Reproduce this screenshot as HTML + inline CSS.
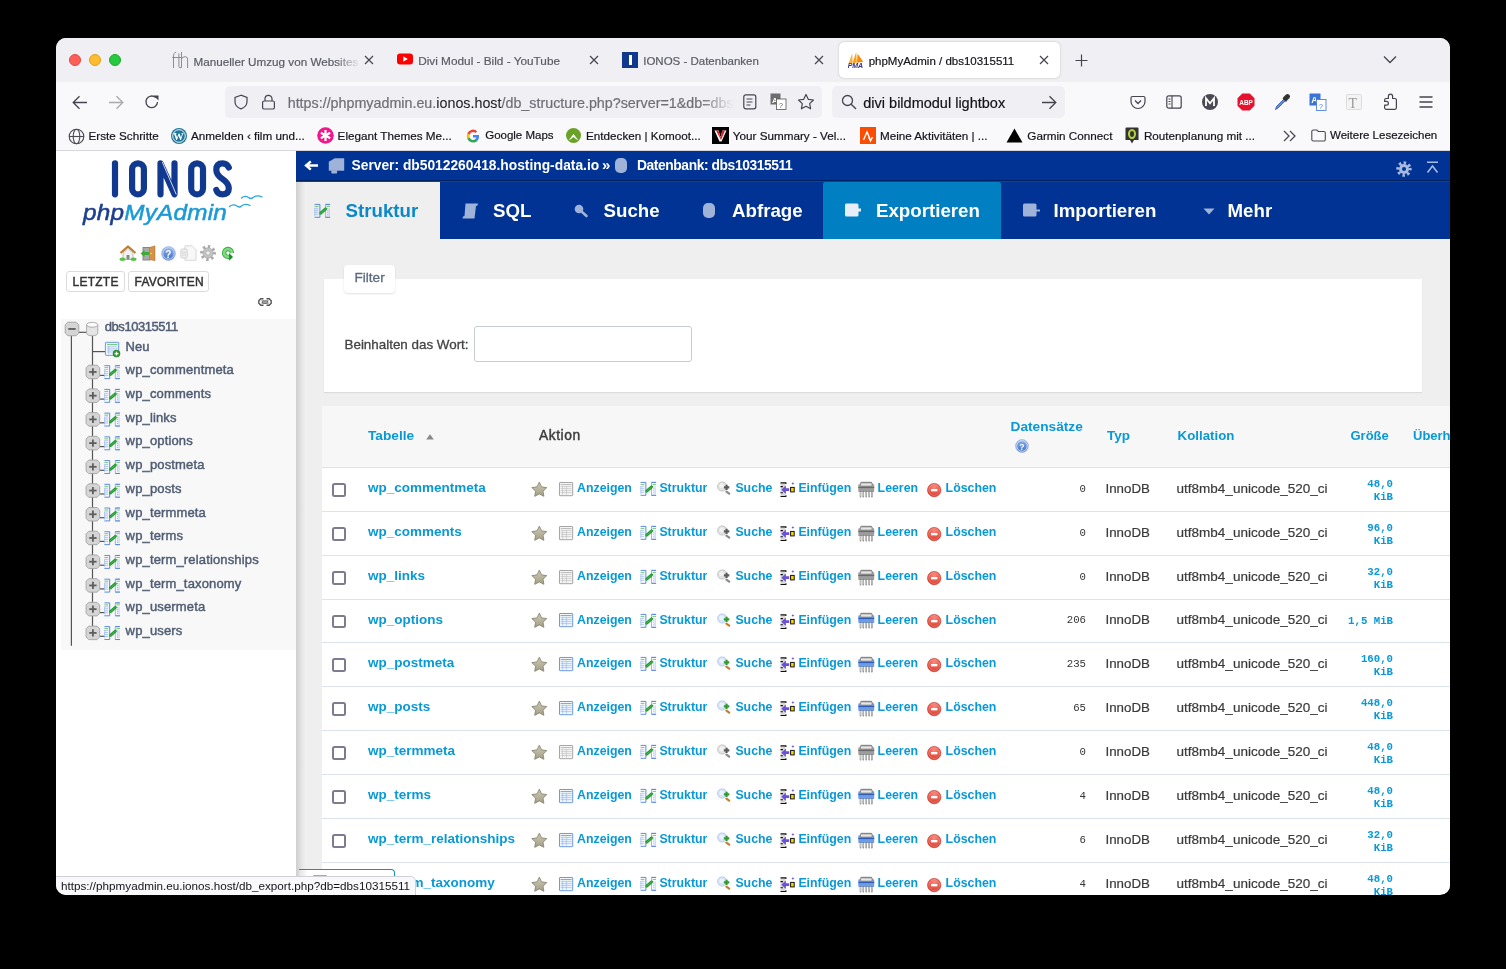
<!DOCTYPE html>
<html><head><meta charset="utf-8">
<style>
*{box-sizing:border-box}
html,body{margin:0;padding:0}
body{background:#000;width:1506px;height:969px;overflow:hidden;position:relative;font-family:"Liberation Sans",sans-serif}
#win{position:absolute;left:56px;top:38px;width:1394px;height:857px;border-radius:10px;overflow:hidden;background:#fff}
#pg{position:absolute;left:-56px;top:-38px;width:1506px;height:969px;-webkit-font-smoothing:antialiased;will-change:transform}
.a{position:absolute}
.t{position:absolute;white-space:nowrap;line-height:1}
svg{position:absolute;overflow:visible}
</style></head>
<body>
<div id="win"><div id="pg">

<!-- ============ TAB STRIP ============ -->
<div class="a" style="left:0;top:38px;width:1506px;height:44px;background:#f0f0f4"></div>
<div class="a" style="left:69px;top:54px;width:12px;height:12px;border-radius:50%;background:#fe5f57;border:0.5px solid #e2463f"></div>
<div class="a" style="left:89px;top:54px;width:12px;height:12px;border-radius:50%;background:#febc2e;border:0.5px solid #e1a116"></div>
<div class="a" style="left:109px;top:54px;width:12px;height:12px;border-radius:50%;background:#28c840;border:0.5px solid #1aab29"></div>

<!-- tab1 -->
<svg style="left:168px;top:48px" width="24" height="24" viewBox="0 0 24 24"><g fill="none" stroke="#8d8d8d" stroke-width="1"><path d="M5.5 20V9Q5.5 4.2 8.2 4.2"/><path d="M4.2 9.5H14.4"/><path d="M10.9 5.4V18.5Q10.9 19.6 12 19.6H13.5"/><path d="M13.5 4V19.6"/><path d="M13.5 11Q14.5 8.7 17 8.7Q19.6 8.7 19.6 11V20"/></g></svg>
<div class="t" style="left:193.5px;top:55.5px;font-size:11.7px;color:#5b5b66;-webkit-text-stroke:0.2px #5b5b66">Manueller Umzug von Websites</div>
<div class="a" style="left:335px;top:48px;width:26px;height:24px;background:linear-gradient(90deg,rgba(240,240,244,0),#f0f0f4)"></div>
<svg style="left:364px;top:55px" width="10" height="10" viewBox="0 0 10 10"><path d="M1 1L9 9M9 1L1 9" stroke="#45444f" stroke-width="1.2"/></svg>

<!-- tab2 -->
<svg style="left:397px;top:53px" width="16" height="12" viewBox="0 0 16 12"><rect x="0" y="0.5" width="16" height="11" rx="3" fill="#f00"/><path d="M6.3 3.3v5.4L10.8 6z" fill="#fff"/></svg>
<div class="t" style="left:418.2px;top:55.5px;font-size:11.8px;color:#5b5b66;-webkit-text-stroke:0.2px #5b5b66">Divi Modul - Bild - YouTube</div>
<svg style="left:589px;top:55px" width="10" height="10" viewBox="0 0 10 10"><path d="M1 1L9 9M9 1L1 9" stroke="#45444f" stroke-width="1.2"/></svg>

<!-- tab3 -->
<div class="a" style="left:622px;top:52px;width:16px;height:16px;background:#11388f"></div>
<div class="a" style="left:628.5px;top:55px;width:3px;height:10px;background:#fff"></div>
<div class="t" style="left:643.2px;top:55.5px;font-size:11.5px;color:#5b5b66;-webkit-text-stroke:0.2px #5b5b66">IONOS - Datenbanken</div>
<svg style="left:814px;top:55px" width="10" height="10" viewBox="0 0 10 10"><path d="M1 1L9 9M9 1L1 9" stroke="#45444f" stroke-width="1.2"/></svg>

<!-- active tab -->
<div class="a" style="left:839px;top:42px;width:221px;height:36px;background:#fff;border-radius:5px;box-shadow:0 0 2px rgba(0,0,0,.25)"></div>
<svg style="left:845.5px;top:51px" width="20" height="18" viewBox="0 0 20 18"><path d="M2.6 12.2L6.2 2.4 6.6 12z" fill="#fbb03b"/><path d="M6.6 12L10.2 1 10.8 11.8z" fill="#f7a21b"/><path d="M11 11.8L11.6 2.8Q14 6 17.2 10.8z" fill="#f38a0c"/><text x="1.8" y="16.6" font-size="7" font-weight="bold" font-style="italic" fill="#34347a" font-family="Liberation Sans" letter-spacing="-0.2">PMA</text></svg>
<div class="t" style="left:868.7px;top:55.5px;font-size:11.5px;color:#15141a;-webkit-text-stroke:0.2px #15141a">phpMyAdmin / dbs10315511</div>
<svg style="left:1039px;top:55px" width="10" height="10" viewBox="0 0 10 10"><path d="M1 1L9 9M9 1L1 9" stroke="#45444f" stroke-width="1.2"/></svg>
<svg style="left:1075px;top:54px" width="13" height="13" viewBox="0 0 13 13"><path d="M6.5 0.5v12M0.5 6.5h12" stroke="#45444f" stroke-width="1.2"/></svg>
<svg style="left:1383px;top:55px" width="14" height="9" viewBox="0 0 14 9"><path d="M1 1.5L7 7.5 13 1.5" fill="none" stroke="#45444f" stroke-width="1.3"/></svg>

<!-- ============ NAV TOOLBAR ============ -->
<div class="a" style="left:0;top:82px;width:1506px;height:68px;background:#f9f9fb"></div>
<div class="a" style="left:0;top:150px;width:1506px;height:1px;background:#d8d8dc"></div>

<svg style="left:72px;top:95px" width="16" height="15" viewBox="0 0 16 15"><path d="M15 7.5H1.5M7.5 1.2L1.2 7.5 7.5 13.8" fill="none" stroke="#45444f" stroke-width="1.3"/></svg>
<svg style="left:108px;top:95px" width="16" height="15" viewBox="0 0 16 15"><path d="M1 7.5h13.5M8.5 1.2l6.3 6.3-6.3 6.3" fill="none" stroke="#a9a9ae" stroke-width="1.3"/></svg>
<svg style="left:144px;top:94px" width="16" height="16" viewBox="0 0 16 16"><path d="M13.5 8A5.8 5.8 0 1 1 11.7 3.6" fill="none" stroke="#45444f" stroke-width="1.3"/><path d="M9.5 1.5h5v5z" fill="#45444f"/></svg>

<div class="a" style="left:225px;top:86px;width:597px;height:32px;background:#f0f0f4;border-radius:5px"></div>
<svg style="left:233px;top:94px" width="16" height="16" viewBox="0 0 16 16"><path d="M8 1.2L2 3.4v4.2c0 3.5 2.6 6.2 6 7.3 3.4-1.1 6-3.8 6-7.3V3.4z" fill="none" stroke="#45444f" stroke-width="1.2"/></svg>
<svg style="left:261px;top:94px" width="15" height="16" viewBox="0 0 15 16"><rect x="1.6" y="7" width="11.8" height="8" rx="1.6" fill="none" stroke="#45444f" stroke-width="1.2"/><path d="M4 7V4.8a3.5 3.5 0 0 1 7 0V7" fill="none" stroke="#45444f" stroke-width="1.2"/></svg>
<div class="t" style="left:287.7px;top:94px;font-size:14.3px;line-height:18px;color:#6f6f76;width:447px;overflow:hidden;-webkit-text-stroke:0.2px #6f6f76">https://phpmyadmin.eu.<span style="color:#15141a">ionos.host</span>/db_structure.php?server=1&amp;db=dbs10315511</div>
<div class="a" style="left:700px;top:90px;width:40px;height:24px;background:linear-gradient(90deg,rgba(240,240,244,0),#f0f0f4 85%)"></div>
<svg style="left:743px;top:94px" width="14" height="16" viewBox="0 0 14 16"><rect x="0.8" y="0.8" width="12" height="14" rx="2" fill="none" stroke="#45444f" stroke-width="1.2"/><path d="M3.5 5h6M3.5 8h6M3.5 11h4" stroke="#45444f" stroke-width="1.2"/></svg>
<svg style="left:770px;top:93px" width="17" height="17" viewBox="0 0 17 17"><rect x="0.5" y="0.5" width="10" height="11" fill="#6d6d6d"/><text x="2" y="9.5" font-size="8" font-weight="bold" fill="#fff" font-family="Liberation Sans">A</text><rect x="6.5" y="6" width="9.5" height="10.5" fill="#fff" stroke="#555" stroke-width="0.8"/><text x="9" y="14.5" font-size="7" fill="#555" font-family="Liberation Sans">?</text></svg>
<svg style="left:797px;top:93px" width="18" height="18" viewBox="0 0 18 18"><path d="M9 1.5l2.3 4.8 5.2.7-3.8 3.6.9 5.2L9 13.3l-4.6 2.5.9-5.2L1.5 7l5.2-.7z" fill="none" stroke="#45444f" stroke-width="1.2" stroke-linejoin="round"/></svg>

<div class="a" style="left:832px;top:86px;width:233px;height:32px;background:#f0f0f4;border-radius:5px"></div>
<svg style="left:841px;top:94px" width="16" height="16" viewBox="0 0 16 16"><circle cx="6.5" cy="6.5" r="5" fill="none" stroke="#45444f" stroke-width="1.3"/><path d="M10.2 10.2L15 15" stroke="#45444f" stroke-width="1.4"/></svg>
<div class="t" style="left:863.3px;top:96px;font-size:14.5px;color:#15141a;-webkit-text-stroke:0.2px #15141a">divi bildmodul lightbox</div>
<svg style="left:1041px;top:95px" width="16" height="15" viewBox="0 0 16 15"><path d="M1 7.5h13.5M8.5 1.2l6.3 6.3-6.3 6.3" fill="none" stroke="#45444f" stroke-width="1.3"/></svg>

<!-- right toolbar icons -->
<svg style="left:1130px;top:94px" width="16" height="16" viewBox="0 0 16 16"><path d="M2.5 2.5h11a1.5 1.5 0 0 1 1.5 1.5v3.5a7 7 0 0 1-14 0V4a1.5 1.5 0 0 1 1.5-1.5z" fill="none" stroke="#45444f" stroke-width="1.2"/><path d="M5 6.5l3 3 3-3" fill="none" stroke="#45444f" stroke-width="1.3"/></svg>
<svg style="left:1166px;top:95px" width="16" height="14" viewBox="0 0 16 14"><rect x="0.8" y="0.8" width="14.4" height="12.4" rx="2" fill="none" stroke="#45444f" stroke-width="1.2"/><path d="M6 1v12M2.5 4h2M2.5 6.5h2M2.5 9h2" stroke="#45444f" stroke-width="1.1"/></svg>
<svg style="left:1202px;top:94px" width="16" height="16" viewBox="0 0 16 16"><circle cx="8" cy="8" r="8" fill="#4a4a55"/><path d="M4 12V4.3l4 5 4-5V12" fill="none" stroke="#fff" stroke-width="1.8"/></svg>
<svg style="left:1237px;top:93px" width="18" height="18" viewBox="0 0 18 18"><path d="M5.3 0.5h7.4l4.8 4.8v7.4l-4.8 4.8H5.3L0.5 12.7V5.3z" fill="#e8112d"/><text x="2.2" y="11.8" font-size="6.5" font-weight="bold" fill="#fff" font-family="Liberation Sans">ABP</text></svg>
<svg style="left:1274px;top:93px" width="17" height="18" viewBox="0 0 17 18"><path d="M1.5 16.5l1-3L10 6l1.5 1.5L4 15z" fill="#5e8ee0" stroke="#2a4d9c" stroke-width="0.8"/><path d="M10 4.5l2.5-2.5a1.8 1.8 0 0 1 2.5 2.5L12.5 7z M9 5l3.5 3.5" fill="#333" stroke="#333" stroke-width="1.4"/></svg>
<svg style="left:1309px;top:93px" width="18" height="18" viewBox="0 0 18 18"><rect x="0.5" y="0.5" width="11" height="12" fill="#3b74d8"/><text x="2.2" y="10" font-size="9" font-weight="bold" fill="#fff" font-family="Liberation Sans">A</text><rect x="7.5" y="6.5" width="9.5" height="11" fill="#fff" stroke="#3b74d8" stroke-width="0.8"/><text x="10" y="15.5" font-size="7" fill="#3b74d8" font-family="Liberation Sans">?</text></svg>
<svg style="left:1346px;top:94px" width="16" height="16" viewBox="0 0 16 16"><rect x="0.5" y="0.5" width="15" height="15" rx="1" fill="#f4f4f4" stroke="#ccc" stroke-width="0.6"/><text x="2.5" y="13.5" font-size="14" font-family="Liberation Serif" fill="#999">T</text></svg>
<svg style="left:1378px;top:90px" width="24" height="24" viewBox="0 0 24 24"><path d="M6.6 10Q6.6 8.5 8.1 8.5H10.4V6.3Q10.4 4.2 12.5 4.2Q14.6 4.2 14.6 6.3V8.5H16.9Q18.4 8.5 18.4 10V17.8Q18.4 19.3 16.9 19.3H8.1Q6.6 19.3 6.6 17.8V15.2H8.5Q10.4 15.2 10.4 13.3Q10.4 11.4 8.5 11.4H6.6Z" fill="none" stroke="#45444f" stroke-width="1.2" stroke-linejoin="round"/></svg>
<svg style="left:1419px;top:96px" width="14" height="12" viewBox="0 0 14 12"><path d="M0.5 1h13M0.5 6h13M0.5 11h13" stroke="#45444f" stroke-width="1.3"/></svg>

<!-- ============ BOOKMARKS ============ -->
<svg style="left:68px;top:128px" width="17" height="17" viewBox="0 0 17 17"><g fill="none" stroke="#4a4a55" stroke-width="1.1"><circle cx="8.5" cy="8.5" r="7.3"/><ellipse cx="8.5" cy="8.5" rx="3.3" ry="7.3"/><path d="M1.2 8.5h14.6"/></g></svg>
<div class="t" style="left:88.5px;top:130px;font-size:11.7px;color:#15141a;-webkit-text-stroke:0.2px #15141a">Erste Schritte</div>
<svg style="left:171px;top:128px" width="16" height="16" viewBox="0 0 16 16"><circle cx="8" cy="8" r="8" fill="#21759b"/><circle cx="8" cy="8" r="6.3" fill="none" stroke="#fff" stroke-width="0.9"/><text x="2.2" y="12.3" font-size="10.5" font-weight="bold" font-family="Liberation Serif" fill="#fff">W</text></svg>
<div class="t" style="left:191px;top:130px;font-size:11.7px;color:#15141a;-webkit-text-stroke:0.2px #15141a">Anmelden ‹ film und...</div>
<svg style="left:317px;top:127px" width="17" height="17" viewBox="0 0 17 17"><circle cx="8.5" cy="8.5" r="8.3" fill="#f0188a"/><path d="M8.5 3v11M3.8 5.8l9.4 5.4M13.2 5.8l-9.4 5.4" stroke="#fff" stroke-width="2.2"/></svg>
<div class="t" style="left:337.6px;top:130px;font-size:11.7px;color:#15141a;-webkit-text-stroke:0.2px #15141a">Elegant Themes Me...</div>
<svg style="left:466px;top:129px" width="14" height="14" viewBox="0 0 14 14"><path d="M13 7.2c0-.5 0-.9-.1-1.3H7v2.5h3.4a3 3 0 0 1-1.3 1.9v1.6h2.1c1.2-1.1 1.8-2.7 1.8-4.7z" fill="#4285f4"/><path d="M7 13.5c1.7 0 3.2-.6 4.2-1.6l-2.1-1.6c-.6.4-1.3.6-2.1.6-1.6 0-3-1.1-3.5-2.6H1.4v1.7A6.4 6.4 0 0 0 7 13.5z" fill="#34a853"/><path d="M3.5 8.3a3.9 3.9 0 0 1 0-2.5V4.1H1.4a6.4 6.4 0 0 0 0 5.9z" fill="#fbbc05"/><path d="M7 3.1c.9 0 1.8.3 2.4.9l1.8-1.8A6.3 6.3 0 0 0 1.4 4.1l2.1 1.7C4 4.3 5.4 3.1 7 3.1z" fill="#ea4335"/></svg>
<div class="t" style="left:485.2px;top:130px;font-size:11.5px;color:#15141a;-webkit-text-stroke:0.2px #15141a">Google Maps</div>
<svg style="left:566px;top:128px" width="15" height="15" viewBox="0 0 15 15"><circle cx="7.5" cy="7.5" r="7.5" fill="#6aa127"/><path d="M2.5 12.5L7.5 6l5 6.5-2.5-1.5-2.5-2-2.5 2z" fill="#fff"/></svg>
<div class="t" style="left:586px;top:130px;font-size:11.7px;color:#15141a;-webkit-text-stroke:0.2px #15141a">Entdecken | Komoot...</div>
<svg style="left:712px;top:127px" width="17" height="17" viewBox="0 0 17 17"><rect width="17" height="17" fill="#000"/><path d="M2.5 3.5h4l2 6.5 2-6.5h4l-5 11h-2z" fill="#fff"/><path d="M4 3.5h2.3l2.2 7 2-7h2.5l-4 9.5z" fill="#e41b23"/></svg>
<div class="t" style="left:732.8px;top:130px;font-size:11.7px;color:#15141a;-webkit-text-stroke:0.2px #15141a">Your Summary - Vel...</div>
<svg style="left:860px;top:127px" width="16" height="17" viewBox="0 0 16 17"><rect width="16" height="17" fill="#fc4c02"/><path d="M3.5 13l3.5-8 3.5 8M8.5 10l2 4 2-4" fill="none" stroke="#fff" stroke-width="1.4"/></svg>
<div class="t" style="left:879.9px;top:130px;font-size:11.7px;color:#15141a;-webkit-text-stroke:0.2px #15141a">Meine Aktivitäten | ...</div>
<svg style="left:1006px;top:128px" width="17" height="15" viewBox="0 0 17 15"><path d="M8.5 0.5L16.5 14.5H0.5z" fill="#000"/></svg>
<div class="t" style="left:1027.3px;top:130px;font-size:11.7px;color:#15141a;-webkit-text-stroke:0.2px #15141a">Garmin Connect</div>
<svg style="left:1125px;top:127px" width="14" height="17" viewBox="0 0 14 17"><path d="M1.5 0.5h11a1 1 0 0 1 1 1v11.5H9l-2 3.5-2-3.5H.5V1.5a1 1 0 0 1 1-1z" fill="#333"/><ellipse cx="7" cy="7" rx="3" ry="4" fill="none" stroke="#b5d53a" stroke-width="2"/></svg>
<div class="t" style="left:1143.9px;top:130px;font-size:11.7px;color:#15141a;-webkit-text-stroke:0.2px #15141a">Routenplanung mit ...</div>
<svg style="left:1283px;top:130px" width="14" height="12" viewBox="0 0 14 12"><path d="M1 1l5 5-5 5M7 1l5 5-5 5" fill="none" stroke="#4a4a55" stroke-width="1.3"/></svg>
<svg style="left:1311px;top:129px" width="15" height="13" viewBox="0 0 15 13"><path d="M0.8 2.5a1.5 1.5 0 0 1 1.5-1.5h3.5l1.5 1.5h5.5a1.5 1.5 0 0 1 1.5 1.5v6.5a1.5 1.5 0 0 1-1.5 1.5H2.3a1.5 1.5 0 0 1-1.5-1.5z" fill="none" stroke="#4a4a55" stroke-width="1.1"/></svg>
<div class="t" style="left:1330px;top:130px;font-size:11.5px;color:#15141a;-webkit-text-stroke:0.2px #15141a">Weitere Lesezeichen</div>

<div class="a" style="left:56px;top:151px;width:240px;height:743px;background:#fff"></div>
<svg style="left:110px;top:158px" width="126" height="40" viewBox="0 0 126 40">
<g fill="none" stroke="#10398f" stroke-width="6.2" stroke-linecap="round">
<path d="M5 5.3v31"/>
<rect x="22.1" y="5.3" width="11.8" height="31" rx="5.9"/>
<path d="M50.5 36.3V5.3L64.5 36.3V5.3" stroke-linejoin="round"/>
<rect x="81.2" y="5.3" width="11.8" height="31" rx="5.9"/>
<path d="M118.8 9.5Q117 5.3 112.5 5.3Q106.3 5.3 106.3 11.8Q106.3 16.8 112.2 20.8Q118.8 25.3 118.8 30.3Q118.8 36.3 112.5 36.3Q107.8 36.3 106.3 32"/>
</g>
<path d="M52.3 4L66.3 36.5" stroke="#fff" stroke-width="0.8"/>
</svg>
<div class="t" style="left:82.5px;top:203px;font-size:21.5px;font-style:italic;font-weight:400;letter-spacing:0.2px;color:#1b3e8f;transform:scaleX(1.13);transform-origin:0 0;-webkit-text-stroke:0.5px currentColor">php<span style="color:#1a9ad6">MyAdmin</span></div>
<svg style="left:228px;top:194px" width="36" height="17" viewBox="0 0 36 17">
<g fill="none" stroke="#2aa5de" stroke-width="1.3" stroke-linecap="round">
<path d="M13.5 4Q17 1 20.5 3.5Q23 5.5 25 3.5Q29 0.5 34 3"/>
<path d="M1.5 12.5Q5 9.5 9 12Q11.5 14 13.5 12Q17 9 22 11.5"/>
</g></svg>
<svg style="left:119px;top:245px" width="18" height="16" viewBox="0 0 18 16">
<path d="M1.5 8L9 1.5 16.5 8" fill="none" stroke="#c17a2e" stroke-width="2.2" stroke-linejoin="round"/>
<path d="M4 8l5-4.5 5 4.5v6.5H4z" fill="#f2f2f2" stroke="#999" stroke-width="0.6"/>
<rect x="7.5" y="10" width="3" height="4.5" fill="#888"/>
<ellipse cx="3.5" cy="14.3" rx="3" ry="1.7" fill="#5cbf4a"/><ellipse cx="14.5" cy="14.3" rx="3" ry="1.7" fill="#5cbf4a"/>
</svg>
<svg style="left:140px;top:245px" width="17" height="16" viewBox="0 0 17 16">
<rect x="2.5" y="2" width="8" height="13.5" fill="#888"/><rect x="3.5" y="3" width="6.5" height="11.5" fill="#aaa"/>
<path d="M0.5 8.5l4-3.5v2h4.5v3H4.5v2z" fill="#3faa3a"/>
<path d="M9.5 2.5L15 0.8v15L9.5 14.5z" fill="#d4914a" stroke="#b06f2a" stroke-width="0.5"/>
<circle cx="11" cy="8.5" r="0.8" fill="#ffdd44"/>
</svg>
<svg style="left:160.5px;top:245.5px" width="15" height="15" viewBox="0 0 15 15"><defs><linearGradient id="hg2" x1="0" y1="0" x2="0" y2="1"><stop offset="0" stop-color="#8fb4ea"/><stop offset="1" stop-color="#3f6fc4"/></linearGradient></defs>
<circle cx="7.5" cy="7.5" r="6.9" fill="url(#hg2)" stroke="#9fb9e0" stroke-width="0.7"/>
<circle cx="7.5" cy="7.5" r="5.7" fill="none" stroke="#e6eefa" stroke-width="0.8"/>
<text x="4.3" y="11.5" font-size="10" font-weight="bold" fill="#fff" font-family="Liberation Sans">?</text>
</svg>
<svg style="left:180px;top:245px" width="17" height="16" viewBox="0 0 17 16">
<path d="M5 0.8h7l4 4v10.5H5z" fill="#f8f8f8" stroke="#cfcfcf" stroke-width="0.8"/>
<rect x="0.8" y="4" width="6.5" height="9" rx="1.5" fill="#f0f0f0" stroke="#c9c9c9" stroke-width="0.8"/>
<path d="M3 6v5M5 6v5" stroke="#ccc" stroke-width="0.7"/>
</svg>
<svg style="left:200px;top:245px" width="16" height="16" viewBox="0 0 16 16">
<circle cx="8" cy="8" r="6.3" fill="none" stroke="#a9a9a9" stroke-width="3.2" stroke-dasharray="2.3,2.65" transform="rotate(-8 8 8)"/>
<circle cx="8" cy="8" r="5.2" fill="#c4c4c4" stroke="#a0a0a0" stroke-width="0.6"/>
<circle cx="8" cy="8" r="2.1" fill="#f4f4f4" stroke="#999" stroke-width="0.5"/>
</svg>
<svg style="left:216px;top:242px" width="24" height="22" viewBox="0 0 24 22">
<path d="M15.9 10.9A3.9 3.9 0 1 0 12 14.8H13.5" fill="none" stroke="#34ad3e" stroke-width="4.3"/>
<path d="M15.9 10.9A3.9 3.9 0 1 0 12 14.8H13.5" fill="none" stroke="#86d688" stroke-width="2.6"/>
<path d="M13 10.9L17 15 13.2 18.8z" fill="#17902a"/>
</svg>
<div class="a" style="left:66px;top:271px;width:59px;height:21px;border:1px solid #dcdcdc;border-radius:3px;background:#fff"></div>
<div class="t" style="left:72.5px;top:276px;font-size:12px;color:#333;letter-spacing:0.25px;-webkit-text-stroke:0.45px #333">LETZTE</div>
<div class="a" style="left:128px;top:271px;width:81px;height:21px;border:1px solid #dcdcdc;border-radius:3px;background:#fff"></div>
<div class="t" style="left:134.5px;top:276px;font-size:12px;color:#333;letter-spacing:0.25px;-webkit-text-stroke:0.45px #333">FAVORITEN</div>
<svg style="left:258px;top:298px" width="14" height="8" viewBox="0 0 14 8">
<path d="M5.5 0.8H2.8L0.8 2.8V5.2L2.8 7.2H5.5M8.5 0.8H11.2L13.2 2.8V5.2L11.2 7.2H8.5" fill="none" stroke="#555" stroke-width="1.4"/>
<path d="M2.8 2.5H5.5M2.8 5.5H5.5M8.5 2.5H11.2M8.5 5.5H11.2" stroke="#bbb" stroke-width="0.7"/>
<rect x="4.2" y="2.9" width="5.6" height="2.4" rx="1" fill="#bbb" stroke="#444" stroke-width="0.9"/>
</svg>
<div class="a" style="left:61px;top:319px;width:235px;height:331px;background:#f8f8f8"></div>
<svg style="left:56px;top:310px" width="240" height="345" viewBox="56 310 240 345"><g fill="none" stroke="#555" stroke-width="1.2"><path d="M71.4 335.8V645.7"/><path d="M92.5 335.8V626.1199999999999"/><path d="M78.8 332.3H86.3"/><path d="M92.5 351.6H105"/><path d="M99.7 375.4H104.5"/><path d="M99.7 399.1H104.5"/><path d="M99.7 422.8H104.5"/><path d="M99.7 446.6H104.5"/><path d="M99.7 470.3H104.5"/><path d="M99.7 494.0H104.5"/><path d="M99.7 517.7H104.5"/><path d="M99.7 541.4H104.5"/><path d="M99.7 565.2H104.5"/><path d="M99.7 588.9H104.5"/><path d="M99.7 612.6H104.5"/><path d="M99.7 636.3H104.5"/></g><path d="M67.8 322.2H76.2L78.8 324.8V333.09999999999997L76.2 335.7H67.8L65.2 333.09999999999997V324.8Z" fill="#d5d5d5" stroke="#a3a3a3" stroke-width="0.9" stroke-linejoin="round"/><path d="M68.3 328.95H75.7" stroke="#5e5e5e" stroke-width="1.8"/><path d="M86.6 324.8v8.4c0 1.5 2.5 2.6 5.6 2.6s5.6-1.1 5.6-2.6v-8.4" fill="#e4e4e4" stroke="#9c9c9c" stroke-width="0.8"/><ellipse cx="92.2" cy="324.8" rx="5.6" ry="2.4" fill="#fbfbfb" stroke="#9c9c9c" stroke-width="0.8"/><rect x="105.4" y="342.3" width="13.3" height="13" rx="0.6" fill="#f4f8fe" stroke="#5b8ee0" stroke-width="0.9"/><path d="M107 344.4h10.4" stroke="#59c057" stroke-width="0.9"/><path d="M107 346.3h10.4M107 348.2h10.4M107 350.1h10.4M107 352h10.4M108.7 346v8" stroke="#9ab8ea" stroke-width="0.7"/><circle cx="116.5" cy="353.6" r="3.5" fill="#2f9a2c" stroke="#1f7a1f" stroke-width="0.6"/><path d="M114.6 353.6h3.8M116.5 351.7v3.8" stroke="#fff" stroke-width="1.3"/><path d="M88.69999999999999 365.2H97.1L99.69999999999999 367.8V376.09999999999997L97.1 378.7H88.69999999999999L86.1 376.09999999999997V367.8Z" fill="#d5d5d5" stroke="#a3a3a3" stroke-width="0.9" stroke-linejoin="round"/><path d="M89.19999999999999 371.95H96.6" stroke="#5e5e5e" stroke-width="1.8"/><path d="M92.89999999999999 368.3V375.59999999999997" stroke="#5e5e5e" stroke-width="1.8"/><g transform="translate(104.1,365.3)"><path d="M0.3 0.4H5.6V13.3H0.3" fill="none" stroke="#4b7fd8" stroke-width="0.9"/><path d="M0.5 4.2V12" stroke="#8cb0ee" stroke-width="0.6"/><path d="M0.3 2.4H4.1" stroke="#63c263" stroke-width="0.9"/><path d="M0.3 4.3H4.1M0.3 6.3H4.1M0.3 8.3H4.1M0.3 10.3H4.1" stroke="#8cb0ee" stroke-width="0.7"/><path d="M15.8 0.4H11.2V13.3H15.8" fill="none" stroke="#8cb0ee" stroke-width="0.9"/><path d="M11.2 0.4H15.8M11.2 13.3H15.8" stroke="#4b7fd8" stroke-width="0.9"/><path d="M12.3 2.4H15.8" stroke="#63c263" stroke-width="0.9"/><path d="M13.4 4.3V12" stroke="#8cb0ee" stroke-width="1" stroke-dasharray="1,1"/><path d="M14.9 4.3V12" stroke="#8cb0ee" stroke-width="0.6"/><path d="M6.4 9.1L11.3 4.9" stroke="#1e9a2e" stroke-width="2.9" stroke-linecap="round"/><path d="M6.4 9.1L11.3 4.9" stroke="#62c462" stroke-width="0.8" stroke-linecap="round" stroke-dasharray="0.9,0.9"/></g><path d="M88.69999999999999 388.92H97.1L99.69999999999999 391.52000000000004V399.82L97.1 402.42H88.69999999999999L86.1 399.82V391.52000000000004Z" fill="#d5d5d5" stroke="#a3a3a3" stroke-width="0.9" stroke-linejoin="round"/><path d="M89.19999999999999 395.67H96.6" stroke="#5e5e5e" stroke-width="1.8"/><path d="M92.89999999999999 392.02000000000004V399.32" stroke="#5e5e5e" stroke-width="1.8"/><g transform="translate(104.1,389.02)"><path d="M0.3 0.4H5.6V13.3H0.3" fill="none" stroke="#4b7fd8" stroke-width="0.9"/><path d="M0.5 4.2V12" stroke="#8cb0ee" stroke-width="0.6"/><path d="M0.3 2.4H4.1" stroke="#63c263" stroke-width="0.9"/><path d="M0.3 4.3H4.1M0.3 6.3H4.1M0.3 8.3H4.1M0.3 10.3H4.1" stroke="#8cb0ee" stroke-width="0.7"/><path d="M15.8 0.4H11.2V13.3H15.8" fill="none" stroke="#8cb0ee" stroke-width="0.9"/><path d="M11.2 0.4H15.8M11.2 13.3H15.8" stroke="#4b7fd8" stroke-width="0.9"/><path d="M12.3 2.4H15.8" stroke="#63c263" stroke-width="0.9"/><path d="M13.4 4.3V12" stroke="#8cb0ee" stroke-width="1" stroke-dasharray="1,1"/><path d="M14.9 4.3V12" stroke="#8cb0ee" stroke-width="0.6"/><path d="M6.4 9.1L11.3 4.9" stroke="#1e9a2e" stroke-width="2.9" stroke-linecap="round"/><path d="M6.4 9.1L11.3 4.9" stroke="#62c462" stroke-width="0.8" stroke-linecap="round" stroke-dasharray="0.9,0.9"/></g><path d="M88.69999999999999 412.64H97.1L99.69999999999999 415.24V423.53999999999996L97.1 426.14H88.69999999999999L86.1 423.53999999999996V415.24Z" fill="#d5d5d5" stroke="#a3a3a3" stroke-width="0.9" stroke-linejoin="round"/><path d="M89.19999999999999 419.39H96.6" stroke="#5e5e5e" stroke-width="1.8"/><path d="M92.89999999999999 415.74V423.03999999999996" stroke="#5e5e5e" stroke-width="1.8"/><g transform="translate(104.1,412.74)"><path d="M0.3 0.4H5.6V13.3H0.3" fill="none" stroke="#4b7fd8" stroke-width="0.9"/><path d="M0.5 4.2V12" stroke="#8cb0ee" stroke-width="0.6"/><path d="M0.3 2.4H4.1" stroke="#63c263" stroke-width="0.9"/><path d="M0.3 4.3H4.1M0.3 6.3H4.1M0.3 8.3H4.1M0.3 10.3H4.1" stroke="#8cb0ee" stroke-width="0.7"/><path d="M15.8 0.4H11.2V13.3H15.8" fill="none" stroke="#8cb0ee" stroke-width="0.9"/><path d="M11.2 0.4H15.8M11.2 13.3H15.8" stroke="#4b7fd8" stroke-width="0.9"/><path d="M12.3 2.4H15.8" stroke="#63c263" stroke-width="0.9"/><path d="M13.4 4.3V12" stroke="#8cb0ee" stroke-width="1" stroke-dasharray="1,1"/><path d="M14.9 4.3V12" stroke="#8cb0ee" stroke-width="0.6"/><path d="M6.4 9.1L11.3 4.9" stroke="#1e9a2e" stroke-width="2.9" stroke-linecap="round"/><path d="M6.4 9.1L11.3 4.9" stroke="#62c462" stroke-width="0.8" stroke-linecap="round" stroke-dasharray="0.9,0.9"/></g><path d="M88.69999999999999 436.36H97.1L99.69999999999999 438.96000000000004V447.26L97.1 449.86H88.69999999999999L86.1 447.26V438.96000000000004Z" fill="#d5d5d5" stroke="#a3a3a3" stroke-width="0.9" stroke-linejoin="round"/><path d="M89.19999999999999 443.11H96.6" stroke="#5e5e5e" stroke-width="1.8"/><path d="M92.89999999999999 439.46000000000004V446.76" stroke="#5e5e5e" stroke-width="1.8"/><g transform="translate(104.1,436.46)"><path d="M0.3 0.4H5.6V13.3H0.3" fill="none" stroke="#4b7fd8" stroke-width="0.9"/><path d="M0.5 4.2V12" stroke="#8cb0ee" stroke-width="0.6"/><path d="M0.3 2.4H4.1" stroke="#63c263" stroke-width="0.9"/><path d="M0.3 4.3H4.1M0.3 6.3H4.1M0.3 8.3H4.1M0.3 10.3H4.1" stroke="#8cb0ee" stroke-width="0.7"/><path d="M15.8 0.4H11.2V13.3H15.8" fill="none" stroke="#8cb0ee" stroke-width="0.9"/><path d="M11.2 0.4H15.8M11.2 13.3H15.8" stroke="#4b7fd8" stroke-width="0.9"/><path d="M12.3 2.4H15.8" stroke="#63c263" stroke-width="0.9"/><path d="M13.4 4.3V12" stroke="#8cb0ee" stroke-width="1" stroke-dasharray="1,1"/><path d="M14.9 4.3V12" stroke="#8cb0ee" stroke-width="0.6"/><path d="M6.4 9.1L11.3 4.9" stroke="#1e9a2e" stroke-width="2.9" stroke-linecap="round"/><path d="M6.4 9.1L11.3 4.9" stroke="#62c462" stroke-width="0.8" stroke-linecap="round" stroke-dasharray="0.9,0.9"/></g><path d="M88.69999999999999 460.08H97.1L99.69999999999999 462.68V470.97999999999996L97.1 473.58H88.69999999999999L86.1 470.97999999999996V462.68Z" fill="#d5d5d5" stroke="#a3a3a3" stroke-width="0.9" stroke-linejoin="round"/><path d="M89.19999999999999 466.83H96.6" stroke="#5e5e5e" stroke-width="1.8"/><path d="M92.89999999999999 463.18V470.47999999999996" stroke="#5e5e5e" stroke-width="1.8"/><g transform="translate(104.1,460.18)"><path d="M0.3 0.4H5.6V13.3H0.3" fill="none" stroke="#4b7fd8" stroke-width="0.9"/><path d="M0.5 4.2V12" stroke="#8cb0ee" stroke-width="0.6"/><path d="M0.3 2.4H4.1" stroke="#63c263" stroke-width="0.9"/><path d="M0.3 4.3H4.1M0.3 6.3H4.1M0.3 8.3H4.1M0.3 10.3H4.1" stroke="#8cb0ee" stroke-width="0.7"/><path d="M15.8 0.4H11.2V13.3H15.8" fill="none" stroke="#8cb0ee" stroke-width="0.9"/><path d="M11.2 0.4H15.8M11.2 13.3H15.8" stroke="#4b7fd8" stroke-width="0.9"/><path d="M12.3 2.4H15.8" stroke="#63c263" stroke-width="0.9"/><path d="M13.4 4.3V12" stroke="#8cb0ee" stroke-width="1" stroke-dasharray="1,1"/><path d="M14.9 4.3V12" stroke="#8cb0ee" stroke-width="0.6"/><path d="M6.4 9.1L11.3 4.9" stroke="#1e9a2e" stroke-width="2.9" stroke-linecap="round"/><path d="M6.4 9.1L11.3 4.9" stroke="#62c462" stroke-width="0.8" stroke-linecap="round" stroke-dasharray="0.9,0.9"/></g><path d="M88.69999999999999 483.8H97.1L99.69999999999999 486.40000000000003V494.7L97.1 497.3H88.69999999999999L86.1 494.7V486.40000000000003Z" fill="#d5d5d5" stroke="#a3a3a3" stroke-width="0.9" stroke-linejoin="round"/><path d="M89.19999999999999 490.55H96.6" stroke="#5e5e5e" stroke-width="1.8"/><path d="M92.89999999999999 486.90000000000003V494.2" stroke="#5e5e5e" stroke-width="1.8"/><g transform="translate(104.1,483.9)"><path d="M0.3 0.4H5.6V13.3H0.3" fill="none" stroke="#4b7fd8" stroke-width="0.9"/><path d="M0.5 4.2V12" stroke="#8cb0ee" stroke-width="0.6"/><path d="M0.3 2.4H4.1" stroke="#63c263" stroke-width="0.9"/><path d="M0.3 4.3H4.1M0.3 6.3H4.1M0.3 8.3H4.1M0.3 10.3H4.1" stroke="#8cb0ee" stroke-width="0.7"/><path d="M15.8 0.4H11.2V13.3H15.8" fill="none" stroke="#8cb0ee" stroke-width="0.9"/><path d="M11.2 0.4H15.8M11.2 13.3H15.8" stroke="#4b7fd8" stroke-width="0.9"/><path d="M12.3 2.4H15.8" stroke="#63c263" stroke-width="0.9"/><path d="M13.4 4.3V12" stroke="#8cb0ee" stroke-width="1" stroke-dasharray="1,1"/><path d="M14.9 4.3V12" stroke="#8cb0ee" stroke-width="0.6"/><path d="M6.4 9.1L11.3 4.9" stroke="#1e9a2e" stroke-width="2.9" stroke-linecap="round"/><path d="M6.4 9.1L11.3 4.9" stroke="#62c462" stroke-width="0.8" stroke-linecap="round" stroke-dasharray="0.9,0.9"/></g><path d="M88.69999999999999 507.52H97.1L99.69999999999999 510.12V518.42L97.1 521.02H88.69999999999999L86.1 518.42V510.12Z" fill="#d5d5d5" stroke="#a3a3a3" stroke-width="0.9" stroke-linejoin="round"/><path d="M89.19999999999999 514.27H96.6" stroke="#5e5e5e" stroke-width="1.8"/><path d="M92.89999999999999 510.62V517.92" stroke="#5e5e5e" stroke-width="1.8"/><g transform="translate(104.1,507.62)"><path d="M0.3 0.4H5.6V13.3H0.3" fill="none" stroke="#4b7fd8" stroke-width="0.9"/><path d="M0.5 4.2V12" stroke="#8cb0ee" stroke-width="0.6"/><path d="M0.3 2.4H4.1" stroke="#63c263" stroke-width="0.9"/><path d="M0.3 4.3H4.1M0.3 6.3H4.1M0.3 8.3H4.1M0.3 10.3H4.1" stroke="#8cb0ee" stroke-width="0.7"/><path d="M15.8 0.4H11.2V13.3H15.8" fill="none" stroke="#8cb0ee" stroke-width="0.9"/><path d="M11.2 0.4H15.8M11.2 13.3H15.8" stroke="#4b7fd8" stroke-width="0.9"/><path d="M12.3 2.4H15.8" stroke="#63c263" stroke-width="0.9"/><path d="M13.4 4.3V12" stroke="#8cb0ee" stroke-width="1" stroke-dasharray="1,1"/><path d="M14.9 4.3V12" stroke="#8cb0ee" stroke-width="0.6"/><path d="M6.4 9.1L11.3 4.9" stroke="#1e9a2e" stroke-width="2.9" stroke-linecap="round"/><path d="M6.4 9.1L11.3 4.9" stroke="#62c462" stroke-width="0.8" stroke-linecap="round" stroke-dasharray="0.9,0.9"/></g><path d="M88.69999999999999 531.24H97.1L99.69999999999999 533.84V542.14L97.1 544.74H88.69999999999999L86.1 542.14V533.84Z" fill="#d5d5d5" stroke="#a3a3a3" stroke-width="0.9" stroke-linejoin="round"/><path d="M89.19999999999999 537.99H96.6" stroke="#5e5e5e" stroke-width="1.8"/><path d="M92.89999999999999 534.34V541.64" stroke="#5e5e5e" stroke-width="1.8"/><g transform="translate(104.1,531.34)"><path d="M0.3 0.4H5.6V13.3H0.3" fill="none" stroke="#4b7fd8" stroke-width="0.9"/><path d="M0.5 4.2V12" stroke="#8cb0ee" stroke-width="0.6"/><path d="M0.3 2.4H4.1" stroke="#63c263" stroke-width="0.9"/><path d="M0.3 4.3H4.1M0.3 6.3H4.1M0.3 8.3H4.1M0.3 10.3H4.1" stroke="#8cb0ee" stroke-width="0.7"/><path d="M15.8 0.4H11.2V13.3H15.8" fill="none" stroke="#8cb0ee" stroke-width="0.9"/><path d="M11.2 0.4H15.8M11.2 13.3H15.8" stroke="#4b7fd8" stroke-width="0.9"/><path d="M12.3 2.4H15.8" stroke="#63c263" stroke-width="0.9"/><path d="M13.4 4.3V12" stroke="#8cb0ee" stroke-width="1" stroke-dasharray="1,1"/><path d="M14.9 4.3V12" stroke="#8cb0ee" stroke-width="0.6"/><path d="M6.4 9.1L11.3 4.9" stroke="#1e9a2e" stroke-width="2.9" stroke-linecap="round"/><path d="M6.4 9.1L11.3 4.9" stroke="#62c462" stroke-width="0.8" stroke-linecap="round" stroke-dasharray="0.9,0.9"/></g><path d="M88.69999999999999 554.96H97.1L99.69999999999999 557.5600000000001V565.86L97.1 568.46H88.69999999999999L86.1 565.86V557.5600000000001Z" fill="#d5d5d5" stroke="#a3a3a3" stroke-width="0.9" stroke-linejoin="round"/><path d="M89.19999999999999 561.71H96.6" stroke="#5e5e5e" stroke-width="1.8"/><path d="M92.89999999999999 558.0600000000001V565.36" stroke="#5e5e5e" stroke-width="1.8"/><g transform="translate(104.1,555.06)"><path d="M0.3 0.4H5.6V13.3H0.3" fill="none" stroke="#4b7fd8" stroke-width="0.9"/><path d="M0.5 4.2V12" stroke="#8cb0ee" stroke-width="0.6"/><path d="M0.3 2.4H4.1" stroke="#63c263" stroke-width="0.9"/><path d="M0.3 4.3H4.1M0.3 6.3H4.1M0.3 8.3H4.1M0.3 10.3H4.1" stroke="#8cb0ee" stroke-width="0.7"/><path d="M15.8 0.4H11.2V13.3H15.8" fill="none" stroke="#8cb0ee" stroke-width="0.9"/><path d="M11.2 0.4H15.8M11.2 13.3H15.8" stroke="#4b7fd8" stroke-width="0.9"/><path d="M12.3 2.4H15.8" stroke="#63c263" stroke-width="0.9"/><path d="M13.4 4.3V12" stroke="#8cb0ee" stroke-width="1" stroke-dasharray="1,1"/><path d="M14.9 4.3V12" stroke="#8cb0ee" stroke-width="0.6"/><path d="M6.4 9.1L11.3 4.9" stroke="#1e9a2e" stroke-width="2.9" stroke-linecap="round"/><path d="M6.4 9.1L11.3 4.9" stroke="#62c462" stroke-width="0.8" stroke-linecap="round" stroke-dasharray="0.9,0.9"/></g><path d="M88.69999999999999 578.68H97.1L99.69999999999999 581.28V589.5799999999999L97.1 592.18H88.69999999999999L86.1 589.5799999999999V581.28Z" fill="#d5d5d5" stroke="#a3a3a3" stroke-width="0.9" stroke-linejoin="round"/><path d="M89.19999999999999 585.43H96.6" stroke="#5e5e5e" stroke-width="1.8"/><path d="M92.89999999999999 581.78V589.0799999999999" stroke="#5e5e5e" stroke-width="1.8"/><g transform="translate(104.1,578.78)"><path d="M0.3 0.4H5.6V13.3H0.3" fill="none" stroke="#4b7fd8" stroke-width="0.9"/><path d="M0.5 4.2V12" stroke="#8cb0ee" stroke-width="0.6"/><path d="M0.3 2.4H4.1" stroke="#63c263" stroke-width="0.9"/><path d="M0.3 4.3H4.1M0.3 6.3H4.1M0.3 8.3H4.1M0.3 10.3H4.1" stroke="#8cb0ee" stroke-width="0.7"/><path d="M15.8 0.4H11.2V13.3H15.8" fill="none" stroke="#8cb0ee" stroke-width="0.9"/><path d="M11.2 0.4H15.8M11.2 13.3H15.8" stroke="#4b7fd8" stroke-width="0.9"/><path d="M12.3 2.4H15.8" stroke="#63c263" stroke-width="0.9"/><path d="M13.4 4.3V12" stroke="#8cb0ee" stroke-width="1" stroke-dasharray="1,1"/><path d="M14.9 4.3V12" stroke="#8cb0ee" stroke-width="0.6"/><path d="M6.4 9.1L11.3 4.9" stroke="#1e9a2e" stroke-width="2.9" stroke-linecap="round"/><path d="M6.4 9.1L11.3 4.9" stroke="#62c462" stroke-width="0.8" stroke-linecap="round" stroke-dasharray="0.9,0.9"/></g><path d="M88.69999999999999 602.4H97.1L99.69999999999999 605.0V613.3L97.1 615.9H88.69999999999999L86.1 613.3V605.0Z" fill="#d5d5d5" stroke="#a3a3a3" stroke-width="0.9" stroke-linejoin="round"/><path d="M89.19999999999999 609.15H96.6" stroke="#5e5e5e" stroke-width="1.8"/><path d="M92.89999999999999 605.5V612.8" stroke="#5e5e5e" stroke-width="1.8"/><g transform="translate(104.1,602.5)"><path d="M0.3 0.4H5.6V13.3H0.3" fill="none" stroke="#4b7fd8" stroke-width="0.9"/><path d="M0.5 4.2V12" stroke="#8cb0ee" stroke-width="0.6"/><path d="M0.3 2.4H4.1" stroke="#63c263" stroke-width="0.9"/><path d="M0.3 4.3H4.1M0.3 6.3H4.1M0.3 8.3H4.1M0.3 10.3H4.1" stroke="#8cb0ee" stroke-width="0.7"/><path d="M15.8 0.4H11.2V13.3H15.8" fill="none" stroke="#8cb0ee" stroke-width="0.9"/><path d="M11.2 0.4H15.8M11.2 13.3H15.8" stroke="#4b7fd8" stroke-width="0.9"/><path d="M12.3 2.4H15.8" stroke="#63c263" stroke-width="0.9"/><path d="M13.4 4.3V12" stroke="#8cb0ee" stroke-width="1" stroke-dasharray="1,1"/><path d="M14.9 4.3V12" stroke="#8cb0ee" stroke-width="0.6"/><path d="M6.4 9.1L11.3 4.9" stroke="#1e9a2e" stroke-width="2.9" stroke-linecap="round"/><path d="M6.4 9.1L11.3 4.9" stroke="#62c462" stroke-width="0.8" stroke-linecap="round" stroke-dasharray="0.9,0.9"/></g><path d="M88.69999999999999 626.12H97.1L99.69999999999999 628.72V637.02L97.1 639.62H88.69999999999999L86.1 637.02V628.72Z" fill="#d5d5d5" stroke="#a3a3a3" stroke-width="0.9" stroke-linejoin="round"/><path d="M89.19999999999999 632.87H96.6" stroke="#5e5e5e" stroke-width="1.8"/><path d="M92.89999999999999 629.22V636.52" stroke="#5e5e5e" stroke-width="1.8"/><g transform="translate(104.1,626.22)"><path d="M0.3 0.4H5.6V13.3H0.3" fill="none" stroke="#4b7fd8" stroke-width="0.9"/><path d="M0.5 4.2V12" stroke="#8cb0ee" stroke-width="0.6"/><path d="M0.3 2.4H4.1" stroke="#63c263" stroke-width="0.9"/><path d="M0.3 4.3H4.1M0.3 6.3H4.1M0.3 8.3H4.1M0.3 10.3H4.1" stroke="#8cb0ee" stroke-width="0.7"/><path d="M15.8 0.4H11.2V13.3H15.8" fill="none" stroke="#8cb0ee" stroke-width="0.9"/><path d="M11.2 0.4H15.8M11.2 13.3H15.8" stroke="#4b7fd8" stroke-width="0.9"/><path d="M12.3 2.4H15.8" stroke="#63c263" stroke-width="0.9"/><path d="M13.4 4.3V12" stroke="#8cb0ee" stroke-width="1" stroke-dasharray="1,1"/><path d="M14.9 4.3V12" stroke="#8cb0ee" stroke-width="0.6"/><path d="M6.4 9.1L11.3 4.9" stroke="#1e9a2e" stroke-width="2.9" stroke-linecap="round"/><path d="M6.4 9.1L11.3 4.9" stroke="#62c462" stroke-width="0.8" stroke-linecap="round" stroke-dasharray="0.9,0.9"/></g></svg>
<div class="t" style="left:104.8px;top:319.6px;font-size:13px;color:#505d73;letter-spacing:-0.45px;-webkit-text-stroke:0.45px #505d73">dbs10315511</div>
<div class="t" style="left:125.6px;top:339.5px;font-size:13px;color:#505d73;-webkit-text-stroke:0.45px #505d73">Neu</div>
<div class="t" style="left:125.6px;top:363.2px;font-size:13px;color:#505d73;letter-spacing:0.15px;-webkit-text-stroke:0.45px #505d73">wp_commentmeta</div>
<div class="t" style="left:125.6px;top:386.9px;font-size:13px;color:#505d73;letter-spacing:0.15px;-webkit-text-stroke:0.45px #505d73">wp_comments</div>
<div class="t" style="left:125.6px;top:410.6px;font-size:13px;color:#505d73;letter-spacing:0.15px;-webkit-text-stroke:0.45px #505d73">wp_links</div>
<div class="t" style="left:125.6px;top:434.4px;font-size:13px;color:#505d73;letter-spacing:0.15px;-webkit-text-stroke:0.45px #505d73">wp_options</div>
<div class="t" style="left:125.6px;top:458.1px;font-size:13px;color:#505d73;letter-spacing:0.15px;-webkit-text-stroke:0.45px #505d73">wp_postmeta</div>
<div class="t" style="left:125.6px;top:481.8px;font-size:13px;color:#505d73;letter-spacing:0.15px;-webkit-text-stroke:0.45px #505d73">wp_posts</div>
<div class="t" style="left:125.6px;top:505.5px;font-size:13px;color:#505d73;letter-spacing:0.15px;-webkit-text-stroke:0.45px #505d73">wp_termmeta</div>
<div class="t" style="left:125.6px;top:529.2px;font-size:13px;color:#505d73;letter-spacing:0.15px;-webkit-text-stroke:0.45px #505d73">wp_terms</div>
<div class="t" style="left:125.6px;top:553.0px;font-size:13px;color:#505d73;letter-spacing:0.15px;-webkit-text-stroke:0.45px #505d73">wp_term_relationships</div>
<div class="t" style="left:125.6px;top:576.7px;font-size:13px;color:#505d73;letter-spacing:0.15px;-webkit-text-stroke:0.45px #505d73">wp_term_taxonomy</div>
<div class="t" style="left:125.6px;top:600.4px;font-size:13px;color:#505d73;letter-spacing:0.15px;-webkit-text-stroke:0.45px #505d73">wp_usermeta</div>
<div class="t" style="left:125.6px;top:624.1px;font-size:13px;color:#505d73;letter-spacing:0.15px;-webkit-text-stroke:0.45px #505d73">wp_users</div>
<div class="a" style="left:296px;top:151px;width:1160px;height:743px;background:#efefef"></div>
<div class="a" style="left:296px;top:151px;width:9px;height:743px;background:linear-gradient(90deg,#cfcfcf,#efefef)"></div>
<div class="a" style="left:296px;top:151px;width:1160px;height:30px;background:#003394"></div>
<div class="a" style="left:296px;top:180px;width:1160px;height:1px;background:#001f5e"></div>
<div class="a" style="left:296px;top:181px;width:1160px;height:1px;background:#0b449c"></div>
<div class="a" style="left:296px;top:182px;width:1160px;height:57px;background:#003394"></div>
<svg style="left:303.5px;top:159.5px" width="15" height="11" viewBox="0 0 15 11"><path d="M14 5.5H3M6.8 1.3L2 5.5 6.8 9.7" fill="none" stroke="#fff" stroke-width="2.4"/></svg>
<svg style="left:327.5px;top:157.5px" width="17" height="16" viewBox="0 0 17 16">
<path d="M6.8 0.3H16.2V12.7H0.8V3.7z" fill="#9fb2d8"/><rect x="3.3" y="12.3" width="5.8" height="3.2" rx="0.8" fill="#9fb2d8"/>
</svg>
<div class="t" style="left:351.5px;top:159px;font-size:13.8px;font-weight:700;color:#fff;letter-spacing:0px">Server: db5012260418.hosting-data.io</div>
<div class="t" style="left:602px;top:157px;font-size:15px;font-weight:700;color:#fff">»</div>
<svg style="left:615px;top:158px" width="12" height="15" viewBox="0 0 12 15"><rect x="0" y="0" width="12" height="15" rx="5" fill="#9fb2d8"/></svg>
<div class="t" style="left:637px;top:159px;font-size:13.8px;font-weight:700;color:#fff;letter-spacing:-0.4px">Datenbank: dbs10315511</div>
<svg style="left:1396px;top:160.5px" width="16" height="16" viewBox="0 0 16 16">
<circle cx="8" cy="8" r="6.2" fill="none" stroke="#a9bbe0" stroke-width="3" stroke-dasharray="2.4,2.47" transform="rotate(-10 8 8)"/>
<circle cx="8" cy="8" r="5" fill="#a9bbe0"/><circle cx="8" cy="8" r="2" fill="#003394"/></svg>
<svg style="left:1426px;top:161px" width="13" height="13" viewBox="0 0 13 13"><path d="M1 1.2h11M1.5 11.5L6.5 5l5 6.5" fill="none" stroke="#a9bbe0" stroke-width="1.6"/></svg>
<div class="a" style="left:296px;top:182px;width:144px;height:57px;background:#efefef"></div>
<div class="a" style="left:296px;top:182px;width:9px;height:57px;background:linear-gradient(90deg,#cfcfcf,#efefef)"></div>
<div class="a" style="left:823px;top:182px;width:178px;height:57px;background:#0080c3;border-radius:2px 2px 0 0"></div>
<svg style="left:314px;top:203.5px" width="17" height="14" viewBox="0 0 17 14"><g transform="translate(0.3,0)"><path d="M0.3 0.4H5.6V13.3H0.3" fill="none" stroke="#4b7fd8" stroke-width="0.9"/><path d="M0.5 4.2V12" stroke="#8cb0ee" stroke-width="0.6"/><path d="M0.3 2.4H4.1" stroke="#63c263" stroke-width="0.9"/><path d="M0.3 4.3H4.1M0.3 6.3H4.1M0.3 8.3H4.1M0.3 10.3H4.1" stroke="#8cb0ee" stroke-width="0.7"/><path d="M15.8 0.4H11.2V13.3H15.8" fill="none" stroke="#8cb0ee" stroke-width="0.9"/><path d="M11.2 0.4H15.8M11.2 13.3H15.8" stroke="#4b7fd8" stroke-width="0.9"/><path d="M12.3 2.4H15.8" stroke="#63c263" stroke-width="0.9"/><path d="M13.4 4.3V12" stroke="#8cb0ee" stroke-width="1" stroke-dasharray="1,1"/><path d="M14.9 4.3V12" stroke="#8cb0ee" stroke-width="0.6"/><path d="M6.4 9.1L11.3 4.9" stroke="#1e9a2e" stroke-width="2.9" stroke-linecap="round"/><path d="M6.4 9.1L11.3 4.9" stroke="#62c462" stroke-width="0.8" stroke-linecap="round" stroke-dasharray="0.9,0.9"/></g></svg>
<div class="t" style="left:345.5px;top:202px;font-size:18.7px;font-weight:700;color:#0a88c8">Struktur</div>
<svg style="left:462px;top:202.5px" width="17" height="16" viewBox="0 0 17 16"><path d="M3.5 0.5h12.5l-0.5 2-1.5 0.5-1.5 12.5H0.5l0.5-2 1.5-0.5z" fill="#9fb2d8"/></svg>
<div class="t" style="left:493px;top:202px;font-size:18.7px;font-weight:700;color:#fff">SQL</div>
<svg style="left:573.5px;top:203.5px" width="14" height="13" viewBox="0 0 14 13"><circle cx="5" cy="5" r="4.3" fill="#9fb2d8"/><path d="M7.5 7.5L12.5 12" stroke="#9fb2d8" stroke-width="2.6" stroke-linecap="round"/></svg>
<div class="t" style="left:603.5px;top:202px;font-size:18.7px;font-weight:700;color:#fff">Suche</div>
<svg style="left:703px;top:202.5px" width="12" height="15" viewBox="0 0 12 15"><rect x="0" y="0" width="12" height="15" rx="5" fill="#9fb2d8"/></svg>
<div class="t" style="left:732px;top:202px;font-size:18.7px;font-weight:700;color:#fff">Abfrage</div>
<svg style="left:845px;top:203px" width="16" height="14" viewBox="0 0 16 14"><rect x="0" y="0.5" width="13.5" height="13" rx="1.5" fill="#e8eef8"/><path d="M13 5.5h3v3h-3z" fill="#e8eef8"/></svg>
<div class="t" style="left:876px;top:202px;font-size:18.7px;font-weight:700;color:#fff">Exportieren</div>
<svg style="left:1022.5px;top:203px" width="17" height="14" viewBox="0 0 17 14"><rect x="0" y="0.5" width="13.5" height="13" rx="1.5" fill="#9fb2d8"/><path d="M13 6.5h4v2h-4z" fill="#9fb2d8"/></svg>
<div class="t" style="left:1053.5px;top:202px;font-size:18.7px;font-weight:700;color:#fff">Importieren</div>
<svg style="left:1202.5px;top:207.5px" width="12" height="7" viewBox="0 0 12 7"><path d="M0.5 0.5h11L6 6.5z" fill="#9fb2d8"/></svg>
<div class="t" style="left:1227.5px;top:202px;font-size:18.7px;font-weight:700;color:#fff">Mehr</div>
<div class="a" style="left:324px;top:279px;width:1098px;height:113px;background:#fff;box-shadow:0 1px 1px rgba(0,0,0,.08)"></div>
<div class="a" style="left:344px;top:265px;width:51px;height:28px;background:#fff;border-radius:4px;box-shadow:0 1px 2px rgba(0,0,0,.12)"></div>
<div class="t" style="left:354.5px;top:270.5px;font-size:13.6px;color:#5b6a80;-webkit-text-stroke:0.3px #5b6a80">Filter</div>
<div class="t" style="left:344.5px;top:337.5px;font-size:13.4px;color:#444;-webkit-text-stroke:0.3px #444">Beinhalten das Wort:</div>
<div class="a" style="left:474px;top:326px;width:218px;height:36px;background:#fff;border:1px solid #c6cbd3;border-radius:3px"></div>
<div class="a" style="left:322px;top:406px;width:1134px;height:61px;background:#f7f7f7"></div>
<div class="a" style="left:322px;top:467px;width:1134px;height:427px;background:#fff"></div>
<div class="t" style="left:368px;top:429px;font-size:13.7px;font-weight:700;color:#0899d6">Tabelle</div>
<svg style="left:425.5px;top:433.5px" width="8" height="6" viewBox="0 0 8 6"><path d="M4 0.3L7.8 5.5H0.2z" fill="#888"/></svg>
<div class="t" style="left:539px;top:429px;font-size:13.8px;font-weight:400;color:#3d3d3d;letter-spacing:0.55px;-webkit-text-stroke:0.45px #3d3d3d">Aktion</div>
<div class="t" style="left:1010.5px;top:420px;font-size:13.7px;font-weight:700;color:#0899d6">Datensätze</div>
<svg style="left:1015px;top:439px" width="14" height="14" viewBox="0 0 14 14"><defs><linearGradient id="hg" x1="0" y1="0" x2="0" y2="1"><stop offset="0" stop-color="#8fb4ea"/><stop offset="1" stop-color="#3f6fc4"/></linearGradient></defs><circle cx="7" cy="7" r="6.4" fill="url(#hg)" stroke="#9fb9e0" stroke-width="0.7"/><circle cx="7" cy="7" r="5.3" fill="none" stroke="#e6eefa" stroke-width="0.8"/>
<text x="4.2" y="10.6" font-size="8.5" font-weight="bold" fill="#fff" font-family="Liberation Sans">?</text></svg>
<div class="t" style="left:1107px;top:429px;font-size:13.5px;font-weight:700;color:#0899d6">Typ</div>
<div class="t" style="left:1177.6px;top:429px;font-size:13.3px;font-weight:700;color:#0899d6">Kollation</div>
<div class="t" style="left:1350.5px;top:429px;font-size:13px;font-weight:700;color:#0899d6">Größe</div>
<div class="t" style="left:1413px;top:429px;font-size:13px;font-weight:700;color:#0899d6">Überhang</div>
<div class="a" style="left:322px;top:467px;width:1134px;height:1px;background:#dde3ec"></div>
<div class="a" style="left:331.8px;top:483.0px;width:13.8px;height:13.8px;border:2px solid #7f7b8f;border-radius:2.5px;background:#fff"></div>
<div class="t" style="left:368px;top:481.3px;font-size:13.5px;font-weight:700;color:#0899d6">wp_commentmeta</div>
<svg style="left:530.5px;top:480.7px" width="17" height="17" viewBox="0 0 17 17"><defs><linearGradient id="sg" x1="0" y1="0" x2="0" y2="1"><stop offset="0" stop-color="#cfcab4"/><stop offset="1" stop-color="#a39e87"/></linearGradient></defs><path d="M8.3 1.2l2.3 4.7 5.2.7-3.8 3.6.9 5.1-4.6-2.4-4.6 2.4.9-5.1L.8 6.6 6 5.9z" fill="url(#sg)" stroke="#8a8571" stroke-width="0.9" stroke-linejoin="round"/></svg>
<svg style="left:558.7px;top:481.7px" width="15" height="15" viewBox="0 0 15 15"><rect x="0.5" y="0.5" width="13.2" height="13.2" rx="0.5" fill="#f6f6f6" stroke="#9c9c9c" stroke-width="0.9"/>
<path d="M1.6 2.6h11" stroke="#b0b0b0" stroke-width="0.9"/><path d="M1.6 4.6h11M1.6 6.6h11M1.6 8.6h11M1.6 10.6h11M3.6 4.2v8.5M7.4 4.2v8.5" stroke="#c2c2c2" stroke-width="0.7"/></svg>
<div class="t" style="left:577px;top:482.4px;font-size:12.35px;font-weight:700;color:#0899d6">Anzeigen</div>
<svg style="left:639.5px;top:482.2px" width="17" height="14" viewBox="0 0 17 14"><g transform="translate(0.3,0)"><path d="M0.3 0.4H5.6V13.3H0.3" fill="none" stroke="#4b7fd8" stroke-width="0.9"/><path d="M0.5 4.2V12" stroke="#8cb0ee" stroke-width="0.6"/><path d="M0.3 2.4H4.1" stroke="#63c263" stroke-width="0.9"/><path d="M0.3 4.3H4.1M0.3 6.3H4.1M0.3 8.3H4.1M0.3 10.3H4.1" stroke="#8cb0ee" stroke-width="0.7"/><path d="M15.8 0.4H11.2V13.3H15.8" fill="none" stroke="#8cb0ee" stroke-width="0.9"/><path d="M11.2 0.4H15.8M11.2 13.3H15.8" stroke="#4b7fd8" stroke-width="0.9"/><path d="M12.3 2.4H15.8" stroke="#63c263" stroke-width="0.9"/><path d="M13.4 4.3V12" stroke="#8cb0ee" stroke-width="1" stroke-dasharray="1,1"/><path d="M14.9 4.3V12" stroke="#8cb0ee" stroke-width="0.6"/><path d="M6.4 9.1L11.3 4.9" stroke="#1e9a2e" stroke-width="2.9" stroke-linecap="round"/><path d="M6.4 9.1L11.3 4.9" stroke="#62c462" stroke-width="0.8" stroke-linecap="round" stroke-dasharray="0.9,0.9"/></g></svg>
<div class="t" style="left:659.4px;top:482.4px;font-size:12.35px;font-weight:700;color:#0899d6">Struktur</div>
<svg style="left:716.6px;top:481.2px" width="15" height="15" viewBox="0 0 15 15"><circle cx="5.2" cy="5.5" r="4.6" fill="#e3e3e3" stroke="#b9b9b9" stroke-width="0.8"/><circle cx="4.6" cy="4.9" r="2.4" fill="#fff" opacity="0.5"/>
<path d="M9.4 10.6L12.2 12.6" stroke="#8a8a8a" stroke-width="2.2" stroke-linecap="round"/><path d="M6.9 6.4h5.4M9.6 3.7v5.4" stroke="#5a5a5a" stroke-width="2.1"/></svg>
<div class="t" style="left:735.4px;top:482.4px;font-size:12.35px;font-weight:700;color:#0899d6">Suche</div>
<svg style="left:779.6px;top:481.3px" width="16" height="17" viewBox="0 0 16 17"><rect x="0.5" y="2" width="4.8" height="13.4" fill="#d8d8d8"/>
<path d="M0.5 1.9H5.9V3.1M0.5 5.6H2.9M0.5 11.7H2.9M0.5 15.5H5.9V14.3" fill="none" stroke="#111" stroke-width="1.1"/>
<path d="M1.3 8.7L5.9 4.4V7.3H9.2V10.1H5.9V13z" fill="#6a52d6"/>
<rect x="10.6" y="6.4" width="3.6" height="4.5" fill="#ffd500" stroke="#151515" stroke-width="1"/>
<path d="M12.9 1.1L13.4 2.1 14.4 2.6 13.4 3.1 12.9 4.1 12.4 3.1 11.4 2.6 12.4 2.1z" fill="#6a52d6"/></svg>
<div class="t" style="left:798.4px;top:482.4px;font-size:12.35px;font-weight:700;color:#0899d6">Einfügen</div>
<svg style="left:857.7px;top:481.8px" width="17" height="16" viewBox="0 0 17 16"><rect x="2.5" y="0.3" width="11.5" height="5" rx="1" fill="#d9d9d9" stroke="#555" stroke-width="0.7"/>
<rect x="0.3" y="2.3" width="15.9" height="7.6" rx="0.6" fill="#9d9d9d"/><rect x="2.5" y="1" width="11.5" height="3" rx="0.8" fill="#e6e6e6" stroke="#666" stroke-width="0.5"/><rect x="0.3" y="4.8" width="15.9" height="1.3" fill="#6a6a6a"/>
<path d="M2.5 10v4.8M5.3 10v4.8M8.2 10v4.8M11.1 10v4.8M13.9 10v4.8" stroke="#777" stroke-width="1.5" stroke-linecap="round"/><path d="M2.5 10v4.6M5.3 10v4.6M8.2 10v4.6M11.1 10v4.6M13.9 10v4.6" stroke="#f4f4f4" stroke-width="0.6"/></svg>
<div class="t" style="left:877.6px;top:482.4px;font-size:12.35px;font-weight:700;color:#0899d6">Leeren</div>
<svg style="left:926.8px;top:482.5px" width="15" height="15" viewBox="0 0 15 15"><defs><radialGradient id="rg" cx="0.5" cy="0.3" r="0.7"><stop offset="0" stop-color="#f98b7f"/><stop offset="1" stop-color="#d93425"/></radialGradient></defs><circle cx="7.2" cy="7.1" r="6.7" fill="url(#rg)" stroke="#c23023" stroke-width="0.6"/>
<circle cx="7.2" cy="7.1" r="5.4" fill="none" stroke="#fff" stroke-width="0.5" opacity="0.45"/><rect x="4" y="6" width="6.4" height="2.3" fill="#fff"/></svg>
<div class="t" style="left:945.6px;top:482.4px;font-size:12.35px;font-weight:700;color:#0899d6">Löschen</div>
<div class="t" style="left:1000px;width:86px;text-align:right;top:483.9px;font-size:10.7px;font-family:'Liberation Mono',monospace;color:#333">0</div>
<div class="t" style="left:1105.5px;top:481.5px;font-size:13.3px;color:#3a3a3a;-webkit-text-stroke:0.2px #3a3a3a">InnoDB</div>
<div class="t" style="left:1176.6px;top:481.5px;font-size:13.5px;color:#3a3a3a;-webkit-text-stroke:0.2px #3a3a3a">utf8mb4_unicode_520_ci</div>
<div class="a" style="left:1300px;width:93px;text-align:right;top:477.9px;font-size:10.7px;line-height:12.7px;font-weight:700;font-family:'Liberation Mono',monospace;color:#0899d6">48,0<br>KiB</div>
<div class="a" style="left:322px;top:511px;width:1134px;height:1px;background:#dde3ec"></div>
<div class="a" style="left:331.8px;top:527.0px;width:13.8px;height:13.8px;border:2px solid #7f7b8f;border-radius:2.5px;background:#fff"></div>
<div class="t" style="left:368px;top:525.3px;font-size:13.5px;font-weight:700;color:#0899d6">wp_comments</div>
<svg style="left:530.5px;top:524.7px" width="17" height="17" viewBox="0 0 17 17"><defs><linearGradient id="sg" x1="0" y1="0" x2="0" y2="1"><stop offset="0" stop-color="#cfcab4"/><stop offset="1" stop-color="#a39e87"/></linearGradient></defs><path d="M8.3 1.2l2.3 4.7 5.2.7-3.8 3.6.9 5.1-4.6-2.4-4.6 2.4.9-5.1L.8 6.6 6 5.9z" fill="url(#sg)" stroke="#8a8571" stroke-width="0.9" stroke-linejoin="round"/></svg>
<svg style="left:558.7px;top:525.7px" width="15" height="15" viewBox="0 0 15 15"><rect x="0.5" y="0.5" width="13.2" height="13.2" rx="0.5" fill="#f6f6f6" stroke="#9c9c9c" stroke-width="0.9"/>
<path d="M1.6 2.6h11" stroke="#b0b0b0" stroke-width="0.9"/><path d="M1.6 4.6h11M1.6 6.6h11M1.6 8.6h11M1.6 10.6h11M3.6 4.2v8.5M7.4 4.2v8.5" stroke="#c2c2c2" stroke-width="0.7"/></svg>
<div class="t" style="left:577px;top:526.4px;font-size:12.35px;font-weight:700;color:#0899d6">Anzeigen</div>
<svg style="left:639.5px;top:526.2px" width="17" height="14" viewBox="0 0 17 14"><g transform="translate(0.3,0)"><path d="M0.3 0.4H5.6V13.3H0.3" fill="none" stroke="#4b7fd8" stroke-width="0.9"/><path d="M0.5 4.2V12" stroke="#8cb0ee" stroke-width="0.6"/><path d="M0.3 2.4H4.1" stroke="#63c263" stroke-width="0.9"/><path d="M0.3 4.3H4.1M0.3 6.3H4.1M0.3 8.3H4.1M0.3 10.3H4.1" stroke="#8cb0ee" stroke-width="0.7"/><path d="M15.8 0.4H11.2V13.3H15.8" fill="none" stroke="#8cb0ee" stroke-width="0.9"/><path d="M11.2 0.4H15.8M11.2 13.3H15.8" stroke="#4b7fd8" stroke-width="0.9"/><path d="M12.3 2.4H15.8" stroke="#63c263" stroke-width="0.9"/><path d="M13.4 4.3V12" stroke="#8cb0ee" stroke-width="1" stroke-dasharray="1,1"/><path d="M14.9 4.3V12" stroke="#8cb0ee" stroke-width="0.6"/><path d="M6.4 9.1L11.3 4.9" stroke="#1e9a2e" stroke-width="2.9" stroke-linecap="round"/><path d="M6.4 9.1L11.3 4.9" stroke="#62c462" stroke-width="0.8" stroke-linecap="round" stroke-dasharray="0.9,0.9"/></g></svg>
<div class="t" style="left:659.4px;top:526.4px;font-size:12.35px;font-weight:700;color:#0899d6">Struktur</div>
<svg style="left:716.6px;top:525.2px" width="15" height="15" viewBox="0 0 15 15"><circle cx="5.2" cy="5.5" r="4.6" fill="#e3e3e3" stroke="#b9b9b9" stroke-width="0.8"/><circle cx="4.6" cy="4.9" r="2.4" fill="#fff" opacity="0.5"/>
<path d="M9.4 10.6L12.2 12.6" stroke="#8a8a8a" stroke-width="2.2" stroke-linecap="round"/><path d="M6.9 6.4h5.4M9.6 3.7v5.4" stroke="#5a5a5a" stroke-width="2.1"/></svg>
<div class="t" style="left:735.4px;top:526.4px;font-size:12.35px;font-weight:700;color:#0899d6">Suche</div>
<svg style="left:779.6px;top:525.3px" width="16" height="17" viewBox="0 0 16 17"><rect x="0.5" y="2" width="4.8" height="13.4" fill="#d8d8d8"/>
<path d="M0.5 1.9H5.9V3.1M0.5 5.6H2.9M0.5 11.7H2.9M0.5 15.5H5.9V14.3" fill="none" stroke="#111" stroke-width="1.1"/>
<path d="M1.3 8.7L5.9 4.4V7.3H9.2V10.1H5.9V13z" fill="#6a52d6"/>
<rect x="10.6" y="6.4" width="3.6" height="4.5" fill="#ffd500" stroke="#151515" stroke-width="1"/>
<path d="M12.9 1.1L13.4 2.1 14.4 2.6 13.4 3.1 12.9 4.1 12.4 3.1 11.4 2.6 12.4 2.1z" fill="#6a52d6"/></svg>
<div class="t" style="left:798.4px;top:526.4px;font-size:12.35px;font-weight:700;color:#0899d6">Einfügen</div>
<svg style="left:857.7px;top:525.8px" width="17" height="16" viewBox="0 0 17 16"><rect x="2.5" y="0.3" width="11.5" height="5" rx="1" fill="#d9d9d9" stroke="#555" stroke-width="0.7"/>
<rect x="0.3" y="2.3" width="15.9" height="7.6" rx="0.6" fill="#9d9d9d"/><rect x="2.5" y="1" width="11.5" height="3" rx="0.8" fill="#e6e6e6" stroke="#666" stroke-width="0.5"/><rect x="0.3" y="4.8" width="15.9" height="1.3" fill="#6a6a6a"/>
<path d="M2.5 10v4.8M5.3 10v4.8M8.2 10v4.8M11.1 10v4.8M13.9 10v4.8" stroke="#777" stroke-width="1.5" stroke-linecap="round"/><path d="M2.5 10v4.6M5.3 10v4.6M8.2 10v4.6M11.1 10v4.6M13.9 10v4.6" stroke="#f4f4f4" stroke-width="0.6"/></svg>
<div class="t" style="left:877.6px;top:526.4px;font-size:12.35px;font-weight:700;color:#0899d6">Leeren</div>
<svg style="left:926.8px;top:526.5px" width="15" height="15" viewBox="0 0 15 15"><defs><radialGradient id="rg" cx="0.5" cy="0.3" r="0.7"><stop offset="0" stop-color="#f98b7f"/><stop offset="1" stop-color="#d93425"/></radialGradient></defs><circle cx="7.2" cy="7.1" r="6.7" fill="url(#rg)" stroke="#c23023" stroke-width="0.6"/>
<circle cx="7.2" cy="7.1" r="5.4" fill="none" stroke="#fff" stroke-width="0.5" opacity="0.45"/><rect x="4" y="6" width="6.4" height="2.3" fill="#fff"/></svg>
<div class="t" style="left:945.6px;top:526.4px;font-size:12.35px;font-weight:700;color:#0899d6">Löschen</div>
<div class="t" style="left:1000px;width:86px;text-align:right;top:527.9px;font-size:10.7px;font-family:'Liberation Mono',monospace;color:#333">0</div>
<div class="t" style="left:1105.5px;top:525.5px;font-size:13.3px;color:#3a3a3a;-webkit-text-stroke:0.2px #3a3a3a">InnoDB</div>
<div class="t" style="left:1176.6px;top:525.5px;font-size:13.5px;color:#3a3a3a;-webkit-text-stroke:0.2px #3a3a3a">utf8mb4_unicode_520_ci</div>
<div class="a" style="left:1300px;width:93px;text-align:right;top:521.9px;font-size:10.7px;line-height:12.7px;font-weight:700;font-family:'Liberation Mono',monospace;color:#0899d6">96,0<br>KiB</div>
<div class="a" style="left:322px;top:555px;width:1134px;height:1px;background:#dde3ec"></div>
<div class="a" style="left:331.8px;top:571.0px;width:13.8px;height:13.8px;border:2px solid #7f7b8f;border-radius:2.5px;background:#fff"></div>
<div class="t" style="left:368px;top:569.3px;font-size:13.5px;font-weight:700;color:#0899d6">wp_links</div>
<svg style="left:530.5px;top:568.7px" width="17" height="17" viewBox="0 0 17 17"><defs><linearGradient id="sg" x1="0" y1="0" x2="0" y2="1"><stop offset="0" stop-color="#cfcab4"/><stop offset="1" stop-color="#a39e87"/></linearGradient></defs><path d="M8.3 1.2l2.3 4.7 5.2.7-3.8 3.6.9 5.1-4.6-2.4-4.6 2.4.9-5.1L.8 6.6 6 5.9z" fill="url(#sg)" stroke="#8a8571" stroke-width="0.9" stroke-linejoin="round"/></svg>
<svg style="left:558.7px;top:569.7px" width="15" height="15" viewBox="0 0 15 15"><rect x="0.5" y="0.5" width="13.2" height="13.2" rx="0.5" fill="#f6f6f6" stroke="#9c9c9c" stroke-width="0.9"/>
<path d="M1.6 2.6h11" stroke="#b0b0b0" stroke-width="0.9"/><path d="M1.6 4.6h11M1.6 6.6h11M1.6 8.6h11M1.6 10.6h11M3.6 4.2v8.5M7.4 4.2v8.5" stroke="#c2c2c2" stroke-width="0.7"/></svg>
<div class="t" style="left:577px;top:570.4px;font-size:12.35px;font-weight:700;color:#0899d6">Anzeigen</div>
<svg style="left:639.5px;top:570.2px" width="17" height="14" viewBox="0 0 17 14"><g transform="translate(0.3,0)"><path d="M0.3 0.4H5.6V13.3H0.3" fill="none" stroke="#4b7fd8" stroke-width="0.9"/><path d="M0.5 4.2V12" stroke="#8cb0ee" stroke-width="0.6"/><path d="M0.3 2.4H4.1" stroke="#63c263" stroke-width="0.9"/><path d="M0.3 4.3H4.1M0.3 6.3H4.1M0.3 8.3H4.1M0.3 10.3H4.1" stroke="#8cb0ee" stroke-width="0.7"/><path d="M15.8 0.4H11.2V13.3H15.8" fill="none" stroke="#8cb0ee" stroke-width="0.9"/><path d="M11.2 0.4H15.8M11.2 13.3H15.8" stroke="#4b7fd8" stroke-width="0.9"/><path d="M12.3 2.4H15.8" stroke="#63c263" stroke-width="0.9"/><path d="M13.4 4.3V12" stroke="#8cb0ee" stroke-width="1" stroke-dasharray="1,1"/><path d="M14.9 4.3V12" stroke="#8cb0ee" stroke-width="0.6"/><path d="M6.4 9.1L11.3 4.9" stroke="#1e9a2e" stroke-width="2.9" stroke-linecap="round"/><path d="M6.4 9.1L11.3 4.9" stroke="#62c462" stroke-width="0.8" stroke-linecap="round" stroke-dasharray="0.9,0.9"/></g></svg>
<div class="t" style="left:659.4px;top:570.4px;font-size:12.35px;font-weight:700;color:#0899d6">Struktur</div>
<svg style="left:716.6px;top:569.2px" width="15" height="15" viewBox="0 0 15 15"><circle cx="5.2" cy="5.5" r="4.6" fill="#e3e3e3" stroke="#b9b9b9" stroke-width="0.8"/><circle cx="4.6" cy="4.9" r="2.4" fill="#fff" opacity="0.5"/>
<path d="M9.4 10.6L12.2 12.6" stroke="#8a8a8a" stroke-width="2.2" stroke-linecap="round"/><path d="M6.9 6.4h5.4M9.6 3.7v5.4" stroke="#5a5a5a" stroke-width="2.1"/></svg>
<div class="t" style="left:735.4px;top:570.4px;font-size:12.35px;font-weight:700;color:#0899d6">Suche</div>
<svg style="left:779.6px;top:569.3px" width="16" height="17" viewBox="0 0 16 17"><rect x="0.5" y="2" width="4.8" height="13.4" fill="#d8d8d8"/>
<path d="M0.5 1.9H5.9V3.1M0.5 5.6H2.9M0.5 11.7H2.9M0.5 15.5H5.9V14.3" fill="none" stroke="#111" stroke-width="1.1"/>
<path d="M1.3 8.7L5.9 4.4V7.3H9.2V10.1H5.9V13z" fill="#6a52d6"/>
<rect x="10.6" y="6.4" width="3.6" height="4.5" fill="#ffd500" stroke="#151515" stroke-width="1"/>
<path d="M12.9 1.1L13.4 2.1 14.4 2.6 13.4 3.1 12.9 4.1 12.4 3.1 11.4 2.6 12.4 2.1z" fill="#6a52d6"/></svg>
<div class="t" style="left:798.4px;top:570.4px;font-size:12.35px;font-weight:700;color:#0899d6">Einfügen</div>
<svg style="left:857.7px;top:569.8px" width="17" height="16" viewBox="0 0 17 16"><rect x="2.5" y="0.3" width="11.5" height="5" rx="1" fill="#d9d9d9" stroke="#555" stroke-width="0.7"/>
<rect x="0.3" y="2.3" width="15.9" height="7.6" rx="0.6" fill="#9d9d9d"/><rect x="2.5" y="1" width="11.5" height="3" rx="0.8" fill="#e6e6e6" stroke="#666" stroke-width="0.5"/><rect x="0.3" y="4.8" width="15.9" height="1.3" fill="#6a6a6a"/>
<path d="M2.5 10v4.8M5.3 10v4.8M8.2 10v4.8M11.1 10v4.8M13.9 10v4.8" stroke="#777" stroke-width="1.5" stroke-linecap="round"/><path d="M2.5 10v4.6M5.3 10v4.6M8.2 10v4.6M11.1 10v4.6M13.9 10v4.6" stroke="#f4f4f4" stroke-width="0.6"/></svg>
<div class="t" style="left:877.6px;top:570.4px;font-size:12.35px;font-weight:700;color:#0899d6">Leeren</div>
<svg style="left:926.8px;top:570.5px" width="15" height="15" viewBox="0 0 15 15"><defs><radialGradient id="rg" cx="0.5" cy="0.3" r="0.7"><stop offset="0" stop-color="#f98b7f"/><stop offset="1" stop-color="#d93425"/></radialGradient></defs><circle cx="7.2" cy="7.1" r="6.7" fill="url(#rg)" stroke="#c23023" stroke-width="0.6"/>
<circle cx="7.2" cy="7.1" r="5.4" fill="none" stroke="#fff" stroke-width="0.5" opacity="0.45"/><rect x="4" y="6" width="6.4" height="2.3" fill="#fff"/></svg>
<div class="t" style="left:945.6px;top:570.4px;font-size:12.35px;font-weight:700;color:#0899d6">Löschen</div>
<div class="t" style="left:1000px;width:86px;text-align:right;top:571.9px;font-size:10.7px;font-family:'Liberation Mono',monospace;color:#333">0</div>
<div class="t" style="left:1105.5px;top:569.5px;font-size:13.3px;color:#3a3a3a;-webkit-text-stroke:0.2px #3a3a3a">InnoDB</div>
<div class="t" style="left:1176.6px;top:569.5px;font-size:13.5px;color:#3a3a3a;-webkit-text-stroke:0.2px #3a3a3a">utf8mb4_unicode_520_ci</div>
<div class="a" style="left:1300px;width:93px;text-align:right;top:565.9px;font-size:10.7px;line-height:12.7px;font-weight:700;font-family:'Liberation Mono',monospace;color:#0899d6">32,0<br>KiB</div>
<div class="a" style="left:322px;top:599px;width:1134px;height:1px;background:#dde3ec"></div>
<div class="a" style="left:331.8px;top:614.5px;width:13.8px;height:13.8px;border:2px solid #7f7b8f;border-radius:2.5px;background:#fff"></div>
<div class="t" style="left:368px;top:612.8px;font-size:13.5px;font-weight:700;color:#0899d6">wp_options</div>
<svg style="left:530.5px;top:612.2px" width="17" height="17" viewBox="0 0 17 17"><defs><linearGradient id="sg" x1="0" y1="0" x2="0" y2="1"><stop offset="0" stop-color="#cfcab4"/><stop offset="1" stop-color="#a39e87"/></linearGradient></defs><path d="M8.3 1.2l2.3 4.7 5.2.7-3.8 3.6.9 5.1-4.6-2.4-4.6 2.4.9-5.1L.8 6.6 6 5.9z" fill="url(#sg)" stroke="#8a8571" stroke-width="0.9" stroke-linejoin="round"/></svg>
<svg style="left:558.7px;top:613.2px" width="15" height="15" viewBox="0 0 15 15"><rect x="0.5" y="0.5" width="13.2" height="13.2" rx="0.5" fill="#f3f7fd" stroke="#5f8fdd" stroke-width="0.9"/>
<path d="M1.6 2.6h11" stroke="#55bb55" stroke-width="0.9"/><path d="M1.6 4.6h11M1.6 6.6h11M1.6 8.6h11M1.6 10.6h11M3.6 4.2v8.5M7.4 4.2v8.5" stroke="#9dbaea" stroke-width="0.7"/></svg>
<div class="t" style="left:577px;top:613.9px;font-size:12.35px;font-weight:700;color:#0899d6">Anzeigen</div>
<svg style="left:639.5px;top:613.7px" width="17" height="14" viewBox="0 0 17 14"><g transform="translate(0.3,0)"><path d="M0.3 0.4H5.6V13.3H0.3" fill="none" stroke="#4b7fd8" stroke-width="0.9"/><path d="M0.5 4.2V12" stroke="#8cb0ee" stroke-width="0.6"/><path d="M0.3 2.4H4.1" stroke="#63c263" stroke-width="0.9"/><path d="M0.3 4.3H4.1M0.3 6.3H4.1M0.3 8.3H4.1M0.3 10.3H4.1" stroke="#8cb0ee" stroke-width="0.7"/><path d="M15.8 0.4H11.2V13.3H15.8" fill="none" stroke="#8cb0ee" stroke-width="0.9"/><path d="M11.2 0.4H15.8M11.2 13.3H15.8" stroke="#4b7fd8" stroke-width="0.9"/><path d="M12.3 2.4H15.8" stroke="#63c263" stroke-width="0.9"/><path d="M13.4 4.3V12" stroke="#8cb0ee" stroke-width="1" stroke-dasharray="1,1"/><path d="M14.9 4.3V12" stroke="#8cb0ee" stroke-width="0.6"/><path d="M6.4 9.1L11.3 4.9" stroke="#1e9a2e" stroke-width="2.9" stroke-linecap="round"/><path d="M6.4 9.1L11.3 4.9" stroke="#62c462" stroke-width="0.8" stroke-linecap="round" stroke-dasharray="0.9,0.9"/></g></svg>
<div class="t" style="left:659.4px;top:613.9px;font-size:12.35px;font-weight:700;color:#0899d6">Struktur</div>
<svg style="left:716.6px;top:612.7px" width="15" height="15" viewBox="0 0 15 15"><circle cx="5.2" cy="5.5" r="4.6" fill="#d6e4f7" stroke="#a9c3e8" stroke-width="0.8"/><circle cx="4.6" cy="4.9" r="2.4" fill="#fff" opacity="0.5"/>
<path d="M9.4 10.6L12.2 12.6" stroke="#c57f2a" stroke-width="2.2" stroke-linecap="round"/><path d="M6.9 6.4h5.4M9.6 3.7v5.4" stroke="#2f9a2f" stroke-width="2.1"/></svg>
<div class="t" style="left:735.4px;top:613.9px;font-size:12.35px;font-weight:700;color:#0899d6">Suche</div>
<svg style="left:779.6px;top:612.8px" width="16" height="17" viewBox="0 0 16 17"><rect x="0.5" y="2" width="4.8" height="13.4" fill="#d8d8d8"/>
<path d="M0.5 1.9H5.9V3.1M0.5 5.6H2.9M0.5 11.7H2.9M0.5 15.5H5.9V14.3" fill="none" stroke="#111" stroke-width="1.1"/>
<path d="M1.3 8.7L5.9 4.4V7.3H9.2V10.1H5.9V13z" fill="#6a52d6"/>
<rect x="10.6" y="6.4" width="3.6" height="4.5" fill="#ffd500" stroke="#151515" stroke-width="1"/>
<path d="M12.9 1.1L13.4 2.1 14.4 2.6 13.4 3.1 12.9 4.1 12.4 3.1 11.4 2.6 12.4 2.1z" fill="#6a52d6"/></svg>
<div class="t" style="left:798.4px;top:613.9px;font-size:12.35px;font-weight:700;color:#0899d6">Einfügen</div>
<svg style="left:857.7px;top:613.3px" width="17" height="16" viewBox="0 0 17 16"><rect x="2.5" y="0.3" width="11.5" height="5" rx="1" fill="#d9d9d9" stroke="#555" stroke-width="0.7"/>
<rect x="0.3" y="2.3" width="15.9" height="7.6" rx="0.6" fill="#6f9de3"/><rect x="2.5" y="1" width="11.5" height="3" rx="0.8" fill="#e6e6e6" stroke="#666" stroke-width="0.5"/><rect x="0.3" y="4.8" width="15.9" height="1.3" fill="#2f5fb8"/>
<path d="M2.5 10v4.8M5.3 10v4.8M8.2 10v4.8M11.1 10v4.8M13.9 10v4.8" stroke="#777" stroke-width="1.5" stroke-linecap="round"/><path d="M2.5 10v4.6M5.3 10v4.6M8.2 10v4.6M11.1 10v4.6M13.9 10v4.6" stroke="#f4f4f4" stroke-width="0.6"/></svg>
<div class="t" style="left:877.6px;top:613.9px;font-size:12.35px;font-weight:700;color:#0899d6">Leeren</div>
<svg style="left:926.8px;top:614.0px" width="15" height="15" viewBox="0 0 15 15"><defs><radialGradient id="rg" cx="0.5" cy="0.3" r="0.7"><stop offset="0" stop-color="#f98b7f"/><stop offset="1" stop-color="#d93425"/></radialGradient></defs><circle cx="7.2" cy="7.1" r="6.7" fill="url(#rg)" stroke="#c23023" stroke-width="0.6"/>
<circle cx="7.2" cy="7.1" r="5.4" fill="none" stroke="#fff" stroke-width="0.5" opacity="0.45"/><rect x="4" y="6" width="6.4" height="2.3" fill="#fff"/></svg>
<div class="t" style="left:945.6px;top:613.9px;font-size:12.35px;font-weight:700;color:#0899d6">Löschen</div>
<div class="t" style="left:1000px;width:86px;text-align:right;top:615.4px;font-size:10.7px;font-family:'Liberation Mono',monospace;color:#333">206</div>
<div class="t" style="left:1105.5px;top:613px;font-size:13.3px;color:#3a3a3a;-webkit-text-stroke:0.2px #3a3a3a">InnoDB</div>
<div class="t" style="left:1176.6px;top:613px;font-size:13.5px;color:#3a3a3a;-webkit-text-stroke:0.2px #3a3a3a">utf8mb4_unicode_520_ci</div>
<div class="t" style="left:1300px;width:93px;text-align:right;top:615.7px;font-size:10.7px;font-weight:700;font-family:'Liberation Mono',monospace;color:#0899d6">1,5 MiB</div>
<div class="a" style="left:322px;top:642px;width:1134px;height:1px;background:#dde3ec"></div>
<div class="a" style="left:331.8px;top:658.0px;width:13.8px;height:13.8px;border:2px solid #7f7b8f;border-radius:2.5px;background:#fff"></div>
<div class="t" style="left:368px;top:656.3px;font-size:13.5px;font-weight:700;color:#0899d6">wp_postmeta</div>
<svg style="left:530.5px;top:655.7px" width="17" height="17" viewBox="0 0 17 17"><defs><linearGradient id="sg" x1="0" y1="0" x2="0" y2="1"><stop offset="0" stop-color="#cfcab4"/><stop offset="1" stop-color="#a39e87"/></linearGradient></defs><path d="M8.3 1.2l2.3 4.7 5.2.7-3.8 3.6.9 5.1-4.6-2.4-4.6 2.4.9-5.1L.8 6.6 6 5.9z" fill="url(#sg)" stroke="#8a8571" stroke-width="0.9" stroke-linejoin="round"/></svg>
<svg style="left:558.7px;top:656.7px" width="15" height="15" viewBox="0 0 15 15"><rect x="0.5" y="0.5" width="13.2" height="13.2" rx="0.5" fill="#f3f7fd" stroke="#5f8fdd" stroke-width="0.9"/>
<path d="M1.6 2.6h11" stroke="#55bb55" stroke-width="0.9"/><path d="M1.6 4.6h11M1.6 6.6h11M1.6 8.6h11M1.6 10.6h11M3.6 4.2v8.5M7.4 4.2v8.5" stroke="#9dbaea" stroke-width="0.7"/></svg>
<div class="t" style="left:577px;top:657.4px;font-size:12.35px;font-weight:700;color:#0899d6">Anzeigen</div>
<svg style="left:639.5px;top:657.2px" width="17" height="14" viewBox="0 0 17 14"><g transform="translate(0.3,0)"><path d="M0.3 0.4H5.6V13.3H0.3" fill="none" stroke="#4b7fd8" stroke-width="0.9"/><path d="M0.5 4.2V12" stroke="#8cb0ee" stroke-width="0.6"/><path d="M0.3 2.4H4.1" stroke="#63c263" stroke-width="0.9"/><path d="M0.3 4.3H4.1M0.3 6.3H4.1M0.3 8.3H4.1M0.3 10.3H4.1" stroke="#8cb0ee" stroke-width="0.7"/><path d="M15.8 0.4H11.2V13.3H15.8" fill="none" stroke="#8cb0ee" stroke-width="0.9"/><path d="M11.2 0.4H15.8M11.2 13.3H15.8" stroke="#4b7fd8" stroke-width="0.9"/><path d="M12.3 2.4H15.8" stroke="#63c263" stroke-width="0.9"/><path d="M13.4 4.3V12" stroke="#8cb0ee" stroke-width="1" stroke-dasharray="1,1"/><path d="M14.9 4.3V12" stroke="#8cb0ee" stroke-width="0.6"/><path d="M6.4 9.1L11.3 4.9" stroke="#1e9a2e" stroke-width="2.9" stroke-linecap="round"/><path d="M6.4 9.1L11.3 4.9" stroke="#62c462" stroke-width="0.8" stroke-linecap="round" stroke-dasharray="0.9,0.9"/></g></svg>
<div class="t" style="left:659.4px;top:657.4px;font-size:12.35px;font-weight:700;color:#0899d6">Struktur</div>
<svg style="left:716.6px;top:656.2px" width="15" height="15" viewBox="0 0 15 15"><circle cx="5.2" cy="5.5" r="4.6" fill="#d6e4f7" stroke="#a9c3e8" stroke-width="0.8"/><circle cx="4.6" cy="4.9" r="2.4" fill="#fff" opacity="0.5"/>
<path d="M9.4 10.6L12.2 12.6" stroke="#c57f2a" stroke-width="2.2" stroke-linecap="round"/><path d="M6.9 6.4h5.4M9.6 3.7v5.4" stroke="#2f9a2f" stroke-width="2.1"/></svg>
<div class="t" style="left:735.4px;top:657.4px;font-size:12.35px;font-weight:700;color:#0899d6">Suche</div>
<svg style="left:779.6px;top:656.3px" width="16" height="17" viewBox="0 0 16 17"><rect x="0.5" y="2" width="4.8" height="13.4" fill="#d8d8d8"/>
<path d="M0.5 1.9H5.9V3.1M0.5 5.6H2.9M0.5 11.7H2.9M0.5 15.5H5.9V14.3" fill="none" stroke="#111" stroke-width="1.1"/>
<path d="M1.3 8.7L5.9 4.4V7.3H9.2V10.1H5.9V13z" fill="#6a52d6"/>
<rect x="10.6" y="6.4" width="3.6" height="4.5" fill="#ffd500" stroke="#151515" stroke-width="1"/>
<path d="M12.9 1.1L13.4 2.1 14.4 2.6 13.4 3.1 12.9 4.1 12.4 3.1 11.4 2.6 12.4 2.1z" fill="#6a52d6"/></svg>
<div class="t" style="left:798.4px;top:657.4px;font-size:12.35px;font-weight:700;color:#0899d6">Einfügen</div>
<svg style="left:857.7px;top:656.8px" width="17" height="16" viewBox="0 0 17 16"><rect x="2.5" y="0.3" width="11.5" height="5" rx="1" fill="#d9d9d9" stroke="#555" stroke-width="0.7"/>
<rect x="0.3" y="2.3" width="15.9" height="7.6" rx="0.6" fill="#6f9de3"/><rect x="2.5" y="1" width="11.5" height="3" rx="0.8" fill="#e6e6e6" stroke="#666" stroke-width="0.5"/><rect x="0.3" y="4.8" width="15.9" height="1.3" fill="#2f5fb8"/>
<path d="M2.5 10v4.8M5.3 10v4.8M8.2 10v4.8M11.1 10v4.8M13.9 10v4.8" stroke="#777" stroke-width="1.5" stroke-linecap="round"/><path d="M2.5 10v4.6M5.3 10v4.6M8.2 10v4.6M11.1 10v4.6M13.9 10v4.6" stroke="#f4f4f4" stroke-width="0.6"/></svg>
<div class="t" style="left:877.6px;top:657.4px;font-size:12.35px;font-weight:700;color:#0899d6">Leeren</div>
<svg style="left:926.8px;top:657.5px" width="15" height="15" viewBox="0 0 15 15"><defs><radialGradient id="rg" cx="0.5" cy="0.3" r="0.7"><stop offset="0" stop-color="#f98b7f"/><stop offset="1" stop-color="#d93425"/></radialGradient></defs><circle cx="7.2" cy="7.1" r="6.7" fill="url(#rg)" stroke="#c23023" stroke-width="0.6"/>
<circle cx="7.2" cy="7.1" r="5.4" fill="none" stroke="#fff" stroke-width="0.5" opacity="0.45"/><rect x="4" y="6" width="6.4" height="2.3" fill="#fff"/></svg>
<div class="t" style="left:945.6px;top:657.4px;font-size:12.35px;font-weight:700;color:#0899d6">Löschen</div>
<div class="t" style="left:1000px;width:86px;text-align:right;top:658.9px;font-size:10.7px;font-family:'Liberation Mono',monospace;color:#333">235</div>
<div class="t" style="left:1105.5px;top:656.5px;font-size:13.3px;color:#3a3a3a;-webkit-text-stroke:0.2px #3a3a3a">InnoDB</div>
<div class="t" style="left:1176.6px;top:656.5px;font-size:13.5px;color:#3a3a3a;-webkit-text-stroke:0.2px #3a3a3a">utf8mb4_unicode_520_ci</div>
<div class="a" style="left:1300px;width:93px;text-align:right;top:652.9px;font-size:10.7px;line-height:12.7px;font-weight:700;font-family:'Liberation Mono',monospace;color:#0899d6">160,0<br>KiB</div>
<div class="a" style="left:322px;top:686px;width:1134px;height:1px;background:#dde3ec"></div>
<div class="a" style="left:331.8px;top:702.0px;width:13.8px;height:13.8px;border:2px solid #7f7b8f;border-radius:2.5px;background:#fff"></div>
<div class="t" style="left:368px;top:700.3px;font-size:13.5px;font-weight:700;color:#0899d6">wp_posts</div>
<svg style="left:530.5px;top:699.7px" width="17" height="17" viewBox="0 0 17 17"><defs><linearGradient id="sg" x1="0" y1="0" x2="0" y2="1"><stop offset="0" stop-color="#cfcab4"/><stop offset="1" stop-color="#a39e87"/></linearGradient></defs><path d="M8.3 1.2l2.3 4.7 5.2.7-3.8 3.6.9 5.1-4.6-2.4-4.6 2.4.9-5.1L.8 6.6 6 5.9z" fill="url(#sg)" stroke="#8a8571" stroke-width="0.9" stroke-linejoin="round"/></svg>
<svg style="left:558.7px;top:700.7px" width="15" height="15" viewBox="0 0 15 15"><rect x="0.5" y="0.5" width="13.2" height="13.2" rx="0.5" fill="#f3f7fd" stroke="#5f8fdd" stroke-width="0.9"/>
<path d="M1.6 2.6h11" stroke="#55bb55" stroke-width="0.9"/><path d="M1.6 4.6h11M1.6 6.6h11M1.6 8.6h11M1.6 10.6h11M3.6 4.2v8.5M7.4 4.2v8.5" stroke="#9dbaea" stroke-width="0.7"/></svg>
<div class="t" style="left:577px;top:701.4px;font-size:12.35px;font-weight:700;color:#0899d6">Anzeigen</div>
<svg style="left:639.5px;top:701.2px" width="17" height="14" viewBox="0 0 17 14"><g transform="translate(0.3,0)"><path d="M0.3 0.4H5.6V13.3H0.3" fill="none" stroke="#4b7fd8" stroke-width="0.9"/><path d="M0.5 4.2V12" stroke="#8cb0ee" stroke-width="0.6"/><path d="M0.3 2.4H4.1" stroke="#63c263" stroke-width="0.9"/><path d="M0.3 4.3H4.1M0.3 6.3H4.1M0.3 8.3H4.1M0.3 10.3H4.1" stroke="#8cb0ee" stroke-width="0.7"/><path d="M15.8 0.4H11.2V13.3H15.8" fill="none" stroke="#8cb0ee" stroke-width="0.9"/><path d="M11.2 0.4H15.8M11.2 13.3H15.8" stroke="#4b7fd8" stroke-width="0.9"/><path d="M12.3 2.4H15.8" stroke="#63c263" stroke-width="0.9"/><path d="M13.4 4.3V12" stroke="#8cb0ee" stroke-width="1" stroke-dasharray="1,1"/><path d="M14.9 4.3V12" stroke="#8cb0ee" stroke-width="0.6"/><path d="M6.4 9.1L11.3 4.9" stroke="#1e9a2e" stroke-width="2.9" stroke-linecap="round"/><path d="M6.4 9.1L11.3 4.9" stroke="#62c462" stroke-width="0.8" stroke-linecap="round" stroke-dasharray="0.9,0.9"/></g></svg>
<div class="t" style="left:659.4px;top:701.4px;font-size:12.35px;font-weight:700;color:#0899d6">Struktur</div>
<svg style="left:716.6px;top:700.2px" width="15" height="15" viewBox="0 0 15 15"><circle cx="5.2" cy="5.5" r="4.6" fill="#d6e4f7" stroke="#a9c3e8" stroke-width="0.8"/><circle cx="4.6" cy="4.9" r="2.4" fill="#fff" opacity="0.5"/>
<path d="M9.4 10.6L12.2 12.6" stroke="#c57f2a" stroke-width="2.2" stroke-linecap="round"/><path d="M6.9 6.4h5.4M9.6 3.7v5.4" stroke="#2f9a2f" stroke-width="2.1"/></svg>
<div class="t" style="left:735.4px;top:701.4px;font-size:12.35px;font-weight:700;color:#0899d6">Suche</div>
<svg style="left:779.6px;top:700.3px" width="16" height="17" viewBox="0 0 16 17"><rect x="0.5" y="2" width="4.8" height="13.4" fill="#d8d8d8"/>
<path d="M0.5 1.9H5.9V3.1M0.5 5.6H2.9M0.5 11.7H2.9M0.5 15.5H5.9V14.3" fill="none" stroke="#111" stroke-width="1.1"/>
<path d="M1.3 8.7L5.9 4.4V7.3H9.2V10.1H5.9V13z" fill="#6a52d6"/>
<rect x="10.6" y="6.4" width="3.6" height="4.5" fill="#ffd500" stroke="#151515" stroke-width="1"/>
<path d="M12.9 1.1L13.4 2.1 14.4 2.6 13.4 3.1 12.9 4.1 12.4 3.1 11.4 2.6 12.4 2.1z" fill="#6a52d6"/></svg>
<div class="t" style="left:798.4px;top:701.4px;font-size:12.35px;font-weight:700;color:#0899d6">Einfügen</div>
<svg style="left:857.7px;top:700.8px" width="17" height="16" viewBox="0 0 17 16"><rect x="2.5" y="0.3" width="11.5" height="5" rx="1" fill="#d9d9d9" stroke="#555" stroke-width="0.7"/>
<rect x="0.3" y="2.3" width="15.9" height="7.6" rx="0.6" fill="#6f9de3"/><rect x="2.5" y="1" width="11.5" height="3" rx="0.8" fill="#e6e6e6" stroke="#666" stroke-width="0.5"/><rect x="0.3" y="4.8" width="15.9" height="1.3" fill="#2f5fb8"/>
<path d="M2.5 10v4.8M5.3 10v4.8M8.2 10v4.8M11.1 10v4.8M13.9 10v4.8" stroke="#777" stroke-width="1.5" stroke-linecap="round"/><path d="M2.5 10v4.6M5.3 10v4.6M8.2 10v4.6M11.1 10v4.6M13.9 10v4.6" stroke="#f4f4f4" stroke-width="0.6"/></svg>
<div class="t" style="left:877.6px;top:701.4px;font-size:12.35px;font-weight:700;color:#0899d6">Leeren</div>
<svg style="left:926.8px;top:701.5px" width="15" height="15" viewBox="0 0 15 15"><defs><radialGradient id="rg" cx="0.5" cy="0.3" r="0.7"><stop offset="0" stop-color="#f98b7f"/><stop offset="1" stop-color="#d93425"/></radialGradient></defs><circle cx="7.2" cy="7.1" r="6.7" fill="url(#rg)" stroke="#c23023" stroke-width="0.6"/>
<circle cx="7.2" cy="7.1" r="5.4" fill="none" stroke="#fff" stroke-width="0.5" opacity="0.45"/><rect x="4" y="6" width="6.4" height="2.3" fill="#fff"/></svg>
<div class="t" style="left:945.6px;top:701.4px;font-size:12.35px;font-weight:700;color:#0899d6">Löschen</div>
<div class="t" style="left:1000px;width:86px;text-align:right;top:702.9px;font-size:10.7px;font-family:'Liberation Mono',monospace;color:#333">65</div>
<div class="t" style="left:1105.5px;top:700.5px;font-size:13.3px;color:#3a3a3a;-webkit-text-stroke:0.2px #3a3a3a">InnoDB</div>
<div class="t" style="left:1176.6px;top:700.5px;font-size:13.5px;color:#3a3a3a;-webkit-text-stroke:0.2px #3a3a3a">utf8mb4_unicode_520_ci</div>
<div class="a" style="left:1300px;width:93px;text-align:right;top:696.9px;font-size:10.7px;line-height:12.7px;font-weight:700;font-family:'Liberation Mono',monospace;color:#0899d6">448,0<br>KiB</div>
<div class="a" style="left:322px;top:730px;width:1134px;height:1px;background:#dde3ec"></div>
<div class="a" style="left:331.8px;top:746.0px;width:13.8px;height:13.8px;border:2px solid #7f7b8f;border-radius:2.5px;background:#fff"></div>
<div class="t" style="left:368px;top:744.3px;font-size:13.5px;font-weight:700;color:#0899d6">wp_termmeta</div>
<svg style="left:530.5px;top:743.7px" width="17" height="17" viewBox="0 0 17 17"><defs><linearGradient id="sg" x1="0" y1="0" x2="0" y2="1"><stop offset="0" stop-color="#cfcab4"/><stop offset="1" stop-color="#a39e87"/></linearGradient></defs><path d="M8.3 1.2l2.3 4.7 5.2.7-3.8 3.6.9 5.1-4.6-2.4-4.6 2.4.9-5.1L.8 6.6 6 5.9z" fill="url(#sg)" stroke="#8a8571" stroke-width="0.9" stroke-linejoin="round"/></svg>
<svg style="left:558.7px;top:744.7px" width="15" height="15" viewBox="0 0 15 15"><rect x="0.5" y="0.5" width="13.2" height="13.2" rx="0.5" fill="#f6f6f6" stroke="#9c9c9c" stroke-width="0.9"/>
<path d="M1.6 2.6h11" stroke="#b0b0b0" stroke-width="0.9"/><path d="M1.6 4.6h11M1.6 6.6h11M1.6 8.6h11M1.6 10.6h11M3.6 4.2v8.5M7.4 4.2v8.5" stroke="#c2c2c2" stroke-width="0.7"/></svg>
<div class="t" style="left:577px;top:745.4px;font-size:12.35px;font-weight:700;color:#0899d6">Anzeigen</div>
<svg style="left:639.5px;top:745.2px" width="17" height="14" viewBox="0 0 17 14"><g transform="translate(0.3,0)"><path d="M0.3 0.4H5.6V13.3H0.3" fill="none" stroke="#4b7fd8" stroke-width="0.9"/><path d="M0.5 4.2V12" stroke="#8cb0ee" stroke-width="0.6"/><path d="M0.3 2.4H4.1" stroke="#63c263" stroke-width="0.9"/><path d="M0.3 4.3H4.1M0.3 6.3H4.1M0.3 8.3H4.1M0.3 10.3H4.1" stroke="#8cb0ee" stroke-width="0.7"/><path d="M15.8 0.4H11.2V13.3H15.8" fill="none" stroke="#8cb0ee" stroke-width="0.9"/><path d="M11.2 0.4H15.8M11.2 13.3H15.8" stroke="#4b7fd8" stroke-width="0.9"/><path d="M12.3 2.4H15.8" stroke="#63c263" stroke-width="0.9"/><path d="M13.4 4.3V12" stroke="#8cb0ee" stroke-width="1" stroke-dasharray="1,1"/><path d="M14.9 4.3V12" stroke="#8cb0ee" stroke-width="0.6"/><path d="M6.4 9.1L11.3 4.9" stroke="#1e9a2e" stroke-width="2.9" stroke-linecap="round"/><path d="M6.4 9.1L11.3 4.9" stroke="#62c462" stroke-width="0.8" stroke-linecap="round" stroke-dasharray="0.9,0.9"/></g></svg>
<div class="t" style="left:659.4px;top:745.4px;font-size:12.35px;font-weight:700;color:#0899d6">Struktur</div>
<svg style="left:716.6px;top:744.2px" width="15" height="15" viewBox="0 0 15 15"><circle cx="5.2" cy="5.5" r="4.6" fill="#e3e3e3" stroke="#b9b9b9" stroke-width="0.8"/><circle cx="4.6" cy="4.9" r="2.4" fill="#fff" opacity="0.5"/>
<path d="M9.4 10.6L12.2 12.6" stroke="#8a8a8a" stroke-width="2.2" stroke-linecap="round"/><path d="M6.9 6.4h5.4M9.6 3.7v5.4" stroke="#5a5a5a" stroke-width="2.1"/></svg>
<div class="t" style="left:735.4px;top:745.4px;font-size:12.35px;font-weight:700;color:#0899d6">Suche</div>
<svg style="left:779.6px;top:744.3px" width="16" height="17" viewBox="0 0 16 17"><rect x="0.5" y="2" width="4.8" height="13.4" fill="#d8d8d8"/>
<path d="M0.5 1.9H5.9V3.1M0.5 5.6H2.9M0.5 11.7H2.9M0.5 15.5H5.9V14.3" fill="none" stroke="#111" stroke-width="1.1"/>
<path d="M1.3 8.7L5.9 4.4V7.3H9.2V10.1H5.9V13z" fill="#6a52d6"/>
<rect x="10.6" y="6.4" width="3.6" height="4.5" fill="#ffd500" stroke="#151515" stroke-width="1"/>
<path d="M12.9 1.1L13.4 2.1 14.4 2.6 13.4 3.1 12.9 4.1 12.4 3.1 11.4 2.6 12.4 2.1z" fill="#6a52d6"/></svg>
<div class="t" style="left:798.4px;top:745.4px;font-size:12.35px;font-weight:700;color:#0899d6">Einfügen</div>
<svg style="left:857.7px;top:744.8px" width="17" height="16" viewBox="0 0 17 16"><rect x="2.5" y="0.3" width="11.5" height="5" rx="1" fill="#d9d9d9" stroke="#555" stroke-width="0.7"/>
<rect x="0.3" y="2.3" width="15.9" height="7.6" rx="0.6" fill="#9d9d9d"/><rect x="2.5" y="1" width="11.5" height="3" rx="0.8" fill="#e6e6e6" stroke="#666" stroke-width="0.5"/><rect x="0.3" y="4.8" width="15.9" height="1.3" fill="#6a6a6a"/>
<path d="M2.5 10v4.8M5.3 10v4.8M8.2 10v4.8M11.1 10v4.8M13.9 10v4.8" stroke="#777" stroke-width="1.5" stroke-linecap="round"/><path d="M2.5 10v4.6M5.3 10v4.6M8.2 10v4.6M11.1 10v4.6M13.9 10v4.6" stroke="#f4f4f4" stroke-width="0.6"/></svg>
<div class="t" style="left:877.6px;top:745.4px;font-size:12.35px;font-weight:700;color:#0899d6">Leeren</div>
<svg style="left:926.8px;top:745.5px" width="15" height="15" viewBox="0 0 15 15"><defs><radialGradient id="rg" cx="0.5" cy="0.3" r="0.7"><stop offset="0" stop-color="#f98b7f"/><stop offset="1" stop-color="#d93425"/></radialGradient></defs><circle cx="7.2" cy="7.1" r="6.7" fill="url(#rg)" stroke="#c23023" stroke-width="0.6"/>
<circle cx="7.2" cy="7.1" r="5.4" fill="none" stroke="#fff" stroke-width="0.5" opacity="0.45"/><rect x="4" y="6" width="6.4" height="2.3" fill="#fff"/></svg>
<div class="t" style="left:945.6px;top:745.4px;font-size:12.35px;font-weight:700;color:#0899d6">Löschen</div>
<div class="t" style="left:1000px;width:86px;text-align:right;top:746.9px;font-size:10.7px;font-family:'Liberation Mono',monospace;color:#333">0</div>
<div class="t" style="left:1105.5px;top:744.5px;font-size:13.3px;color:#3a3a3a;-webkit-text-stroke:0.2px #3a3a3a">InnoDB</div>
<div class="t" style="left:1176.6px;top:744.5px;font-size:13.5px;color:#3a3a3a;-webkit-text-stroke:0.2px #3a3a3a">utf8mb4_unicode_520_ci</div>
<div class="a" style="left:1300px;width:93px;text-align:right;top:740.9px;font-size:10.7px;line-height:12.7px;font-weight:700;font-family:'Liberation Mono',monospace;color:#0899d6">48,0<br>KiB</div>
<div class="a" style="left:322px;top:774px;width:1134px;height:1px;background:#dde3ec"></div>
<div class="a" style="left:331.8px;top:790.0px;width:13.8px;height:13.8px;border:2px solid #7f7b8f;border-radius:2.5px;background:#fff"></div>
<div class="t" style="left:368px;top:788.3px;font-size:13.5px;font-weight:700;color:#0899d6">wp_terms</div>
<svg style="left:530.5px;top:787.7px" width="17" height="17" viewBox="0 0 17 17"><defs><linearGradient id="sg" x1="0" y1="0" x2="0" y2="1"><stop offset="0" stop-color="#cfcab4"/><stop offset="1" stop-color="#a39e87"/></linearGradient></defs><path d="M8.3 1.2l2.3 4.7 5.2.7-3.8 3.6.9 5.1-4.6-2.4-4.6 2.4.9-5.1L.8 6.6 6 5.9z" fill="url(#sg)" stroke="#8a8571" stroke-width="0.9" stroke-linejoin="round"/></svg>
<svg style="left:558.7px;top:788.7px" width="15" height="15" viewBox="0 0 15 15"><rect x="0.5" y="0.5" width="13.2" height="13.2" rx="0.5" fill="#f3f7fd" stroke="#5f8fdd" stroke-width="0.9"/>
<path d="M1.6 2.6h11" stroke="#55bb55" stroke-width="0.9"/><path d="M1.6 4.6h11M1.6 6.6h11M1.6 8.6h11M1.6 10.6h11M3.6 4.2v8.5M7.4 4.2v8.5" stroke="#9dbaea" stroke-width="0.7"/></svg>
<div class="t" style="left:577px;top:789.4px;font-size:12.35px;font-weight:700;color:#0899d6">Anzeigen</div>
<svg style="left:639.5px;top:789.2px" width="17" height="14" viewBox="0 0 17 14"><g transform="translate(0.3,0)"><path d="M0.3 0.4H5.6V13.3H0.3" fill="none" stroke="#4b7fd8" stroke-width="0.9"/><path d="M0.5 4.2V12" stroke="#8cb0ee" stroke-width="0.6"/><path d="M0.3 2.4H4.1" stroke="#63c263" stroke-width="0.9"/><path d="M0.3 4.3H4.1M0.3 6.3H4.1M0.3 8.3H4.1M0.3 10.3H4.1" stroke="#8cb0ee" stroke-width="0.7"/><path d="M15.8 0.4H11.2V13.3H15.8" fill="none" stroke="#8cb0ee" stroke-width="0.9"/><path d="M11.2 0.4H15.8M11.2 13.3H15.8" stroke="#4b7fd8" stroke-width="0.9"/><path d="M12.3 2.4H15.8" stroke="#63c263" stroke-width="0.9"/><path d="M13.4 4.3V12" stroke="#8cb0ee" stroke-width="1" stroke-dasharray="1,1"/><path d="M14.9 4.3V12" stroke="#8cb0ee" stroke-width="0.6"/><path d="M6.4 9.1L11.3 4.9" stroke="#1e9a2e" stroke-width="2.9" stroke-linecap="round"/><path d="M6.4 9.1L11.3 4.9" stroke="#62c462" stroke-width="0.8" stroke-linecap="round" stroke-dasharray="0.9,0.9"/></g></svg>
<div class="t" style="left:659.4px;top:789.4px;font-size:12.35px;font-weight:700;color:#0899d6">Struktur</div>
<svg style="left:716.6px;top:788.2px" width="15" height="15" viewBox="0 0 15 15"><circle cx="5.2" cy="5.5" r="4.6" fill="#d6e4f7" stroke="#a9c3e8" stroke-width="0.8"/><circle cx="4.6" cy="4.9" r="2.4" fill="#fff" opacity="0.5"/>
<path d="M9.4 10.6L12.2 12.6" stroke="#c57f2a" stroke-width="2.2" stroke-linecap="round"/><path d="M6.9 6.4h5.4M9.6 3.7v5.4" stroke="#2f9a2f" stroke-width="2.1"/></svg>
<div class="t" style="left:735.4px;top:789.4px;font-size:12.35px;font-weight:700;color:#0899d6">Suche</div>
<svg style="left:779.6px;top:788.3px" width="16" height="17" viewBox="0 0 16 17"><rect x="0.5" y="2" width="4.8" height="13.4" fill="#d8d8d8"/>
<path d="M0.5 1.9H5.9V3.1M0.5 5.6H2.9M0.5 11.7H2.9M0.5 15.5H5.9V14.3" fill="none" stroke="#111" stroke-width="1.1"/>
<path d="M1.3 8.7L5.9 4.4V7.3H9.2V10.1H5.9V13z" fill="#6a52d6"/>
<rect x="10.6" y="6.4" width="3.6" height="4.5" fill="#ffd500" stroke="#151515" stroke-width="1"/>
<path d="M12.9 1.1L13.4 2.1 14.4 2.6 13.4 3.1 12.9 4.1 12.4 3.1 11.4 2.6 12.4 2.1z" fill="#6a52d6"/></svg>
<div class="t" style="left:798.4px;top:789.4px;font-size:12.35px;font-weight:700;color:#0899d6">Einfügen</div>
<svg style="left:857.7px;top:788.8px" width="17" height="16" viewBox="0 0 17 16"><rect x="2.5" y="0.3" width="11.5" height="5" rx="1" fill="#d9d9d9" stroke="#555" stroke-width="0.7"/>
<rect x="0.3" y="2.3" width="15.9" height="7.6" rx="0.6" fill="#6f9de3"/><rect x="2.5" y="1" width="11.5" height="3" rx="0.8" fill="#e6e6e6" stroke="#666" stroke-width="0.5"/><rect x="0.3" y="4.8" width="15.9" height="1.3" fill="#2f5fb8"/>
<path d="M2.5 10v4.8M5.3 10v4.8M8.2 10v4.8M11.1 10v4.8M13.9 10v4.8" stroke="#777" stroke-width="1.5" stroke-linecap="round"/><path d="M2.5 10v4.6M5.3 10v4.6M8.2 10v4.6M11.1 10v4.6M13.9 10v4.6" stroke="#f4f4f4" stroke-width="0.6"/></svg>
<div class="t" style="left:877.6px;top:789.4px;font-size:12.35px;font-weight:700;color:#0899d6">Leeren</div>
<svg style="left:926.8px;top:789.5px" width="15" height="15" viewBox="0 0 15 15"><defs><radialGradient id="rg" cx="0.5" cy="0.3" r="0.7"><stop offset="0" stop-color="#f98b7f"/><stop offset="1" stop-color="#d93425"/></radialGradient></defs><circle cx="7.2" cy="7.1" r="6.7" fill="url(#rg)" stroke="#c23023" stroke-width="0.6"/>
<circle cx="7.2" cy="7.1" r="5.4" fill="none" stroke="#fff" stroke-width="0.5" opacity="0.45"/><rect x="4" y="6" width="6.4" height="2.3" fill="#fff"/></svg>
<div class="t" style="left:945.6px;top:789.4px;font-size:12.35px;font-weight:700;color:#0899d6">Löschen</div>
<div class="t" style="left:1000px;width:86px;text-align:right;top:790.9px;font-size:10.7px;font-family:'Liberation Mono',monospace;color:#333">4</div>
<div class="t" style="left:1105.5px;top:788.5px;font-size:13.3px;color:#3a3a3a;-webkit-text-stroke:0.2px #3a3a3a">InnoDB</div>
<div class="t" style="left:1176.6px;top:788.5px;font-size:13.5px;color:#3a3a3a;-webkit-text-stroke:0.2px #3a3a3a">utf8mb4_unicode_520_ci</div>
<div class="a" style="left:1300px;width:93px;text-align:right;top:784.9px;font-size:10.7px;line-height:12.7px;font-weight:700;font-family:'Liberation Mono',monospace;color:#0899d6">48,0<br>KiB</div>
<div class="a" style="left:322px;top:818px;width:1134px;height:1px;background:#dde3ec"></div>
<div class="a" style="left:331.8px;top:834.0px;width:13.8px;height:13.8px;border:2px solid #7f7b8f;border-radius:2.5px;background:#fff"></div>
<div class="t" style="left:368px;top:832.3px;font-size:13.5px;font-weight:700;color:#0899d6">wp_term_relationships</div>
<svg style="left:530.5px;top:831.7px" width="17" height="17" viewBox="0 0 17 17"><defs><linearGradient id="sg" x1="0" y1="0" x2="0" y2="1"><stop offset="0" stop-color="#cfcab4"/><stop offset="1" stop-color="#a39e87"/></linearGradient></defs><path d="M8.3 1.2l2.3 4.7 5.2.7-3.8 3.6.9 5.1-4.6-2.4-4.6 2.4.9-5.1L.8 6.6 6 5.9z" fill="url(#sg)" stroke="#8a8571" stroke-width="0.9" stroke-linejoin="round"/></svg>
<svg style="left:558.7px;top:832.7px" width="15" height="15" viewBox="0 0 15 15"><rect x="0.5" y="0.5" width="13.2" height="13.2" rx="0.5" fill="#f3f7fd" stroke="#5f8fdd" stroke-width="0.9"/>
<path d="M1.6 2.6h11" stroke="#55bb55" stroke-width="0.9"/><path d="M1.6 4.6h11M1.6 6.6h11M1.6 8.6h11M1.6 10.6h11M3.6 4.2v8.5M7.4 4.2v8.5" stroke="#9dbaea" stroke-width="0.7"/></svg>
<div class="t" style="left:577px;top:833.4px;font-size:12.35px;font-weight:700;color:#0899d6">Anzeigen</div>
<svg style="left:639.5px;top:833.2px" width="17" height="14" viewBox="0 0 17 14"><g transform="translate(0.3,0)"><path d="M0.3 0.4H5.6V13.3H0.3" fill="none" stroke="#4b7fd8" stroke-width="0.9"/><path d="M0.5 4.2V12" stroke="#8cb0ee" stroke-width="0.6"/><path d="M0.3 2.4H4.1" stroke="#63c263" stroke-width="0.9"/><path d="M0.3 4.3H4.1M0.3 6.3H4.1M0.3 8.3H4.1M0.3 10.3H4.1" stroke="#8cb0ee" stroke-width="0.7"/><path d="M15.8 0.4H11.2V13.3H15.8" fill="none" stroke="#8cb0ee" stroke-width="0.9"/><path d="M11.2 0.4H15.8M11.2 13.3H15.8" stroke="#4b7fd8" stroke-width="0.9"/><path d="M12.3 2.4H15.8" stroke="#63c263" stroke-width="0.9"/><path d="M13.4 4.3V12" stroke="#8cb0ee" stroke-width="1" stroke-dasharray="1,1"/><path d="M14.9 4.3V12" stroke="#8cb0ee" stroke-width="0.6"/><path d="M6.4 9.1L11.3 4.9" stroke="#1e9a2e" stroke-width="2.9" stroke-linecap="round"/><path d="M6.4 9.1L11.3 4.9" stroke="#62c462" stroke-width="0.8" stroke-linecap="round" stroke-dasharray="0.9,0.9"/></g></svg>
<div class="t" style="left:659.4px;top:833.4px;font-size:12.35px;font-weight:700;color:#0899d6">Struktur</div>
<svg style="left:716.6px;top:832.2px" width="15" height="15" viewBox="0 0 15 15"><circle cx="5.2" cy="5.5" r="4.6" fill="#d6e4f7" stroke="#a9c3e8" stroke-width="0.8"/><circle cx="4.6" cy="4.9" r="2.4" fill="#fff" opacity="0.5"/>
<path d="M9.4 10.6L12.2 12.6" stroke="#c57f2a" stroke-width="2.2" stroke-linecap="round"/><path d="M6.9 6.4h5.4M9.6 3.7v5.4" stroke="#2f9a2f" stroke-width="2.1"/></svg>
<div class="t" style="left:735.4px;top:833.4px;font-size:12.35px;font-weight:700;color:#0899d6">Suche</div>
<svg style="left:779.6px;top:832.3px" width="16" height="17" viewBox="0 0 16 17"><rect x="0.5" y="2" width="4.8" height="13.4" fill="#d8d8d8"/>
<path d="M0.5 1.9H5.9V3.1M0.5 5.6H2.9M0.5 11.7H2.9M0.5 15.5H5.9V14.3" fill="none" stroke="#111" stroke-width="1.1"/>
<path d="M1.3 8.7L5.9 4.4V7.3H9.2V10.1H5.9V13z" fill="#6a52d6"/>
<rect x="10.6" y="6.4" width="3.6" height="4.5" fill="#ffd500" stroke="#151515" stroke-width="1"/>
<path d="M12.9 1.1L13.4 2.1 14.4 2.6 13.4 3.1 12.9 4.1 12.4 3.1 11.4 2.6 12.4 2.1z" fill="#6a52d6"/></svg>
<div class="t" style="left:798.4px;top:833.4px;font-size:12.35px;font-weight:700;color:#0899d6">Einfügen</div>
<svg style="left:857.7px;top:832.8px" width="17" height="16" viewBox="0 0 17 16"><rect x="2.5" y="0.3" width="11.5" height="5" rx="1" fill="#d9d9d9" stroke="#555" stroke-width="0.7"/>
<rect x="0.3" y="2.3" width="15.9" height="7.6" rx="0.6" fill="#6f9de3"/><rect x="2.5" y="1" width="11.5" height="3" rx="0.8" fill="#e6e6e6" stroke="#666" stroke-width="0.5"/><rect x="0.3" y="4.8" width="15.9" height="1.3" fill="#2f5fb8"/>
<path d="M2.5 10v4.8M5.3 10v4.8M8.2 10v4.8M11.1 10v4.8M13.9 10v4.8" stroke="#777" stroke-width="1.5" stroke-linecap="round"/><path d="M2.5 10v4.6M5.3 10v4.6M8.2 10v4.6M11.1 10v4.6M13.9 10v4.6" stroke="#f4f4f4" stroke-width="0.6"/></svg>
<div class="t" style="left:877.6px;top:833.4px;font-size:12.35px;font-weight:700;color:#0899d6">Leeren</div>
<svg style="left:926.8px;top:833.5px" width="15" height="15" viewBox="0 0 15 15"><defs><radialGradient id="rg" cx="0.5" cy="0.3" r="0.7"><stop offset="0" stop-color="#f98b7f"/><stop offset="1" stop-color="#d93425"/></radialGradient></defs><circle cx="7.2" cy="7.1" r="6.7" fill="url(#rg)" stroke="#c23023" stroke-width="0.6"/>
<circle cx="7.2" cy="7.1" r="5.4" fill="none" stroke="#fff" stroke-width="0.5" opacity="0.45"/><rect x="4" y="6" width="6.4" height="2.3" fill="#fff"/></svg>
<div class="t" style="left:945.6px;top:833.4px;font-size:12.35px;font-weight:700;color:#0899d6">Löschen</div>
<div class="t" style="left:1000px;width:86px;text-align:right;top:834.9px;font-size:10.7px;font-family:'Liberation Mono',monospace;color:#333">6</div>
<div class="t" style="left:1105.5px;top:832.5px;font-size:13.3px;color:#3a3a3a;-webkit-text-stroke:0.2px #3a3a3a">InnoDB</div>
<div class="t" style="left:1176.6px;top:832.5px;font-size:13.5px;color:#3a3a3a;-webkit-text-stroke:0.2px #3a3a3a">utf8mb4_unicode_520_ci</div>
<div class="a" style="left:1300px;width:93px;text-align:right;top:828.9px;font-size:10.7px;line-height:12.7px;font-weight:700;font-family:'Liberation Mono',monospace;color:#0899d6">32,0<br>KiB</div>
<div class="a" style="left:322px;top:862px;width:1134px;height:1px;background:#dde3ec"></div>
<div class="a" style="left:331.8px;top:878.0px;width:13.8px;height:13.8px;border:2px solid #7f7b8f;border-radius:2.5px;background:#fff"></div>
<div class="t" style="left:368px;top:876.3px;font-size:13.5px;font-weight:700;color:#0899d6">wp_term_taxonomy</div>
<svg style="left:530.5px;top:875.7px" width="17" height="17" viewBox="0 0 17 17"><defs><linearGradient id="sg" x1="0" y1="0" x2="0" y2="1"><stop offset="0" stop-color="#cfcab4"/><stop offset="1" stop-color="#a39e87"/></linearGradient></defs><path d="M8.3 1.2l2.3 4.7 5.2.7-3.8 3.6.9 5.1-4.6-2.4-4.6 2.4.9-5.1L.8 6.6 6 5.9z" fill="url(#sg)" stroke="#8a8571" stroke-width="0.9" stroke-linejoin="round"/></svg>
<svg style="left:558.7px;top:876.7px" width="15" height="15" viewBox="0 0 15 15"><rect x="0.5" y="0.5" width="13.2" height="13.2" rx="0.5" fill="#f3f7fd" stroke="#5f8fdd" stroke-width="0.9"/>
<path d="M1.6 2.6h11" stroke="#55bb55" stroke-width="0.9"/><path d="M1.6 4.6h11M1.6 6.6h11M1.6 8.6h11M1.6 10.6h11M3.6 4.2v8.5M7.4 4.2v8.5" stroke="#9dbaea" stroke-width="0.7"/></svg>
<div class="t" style="left:577px;top:877.4px;font-size:12.35px;font-weight:700;color:#0899d6">Anzeigen</div>
<svg style="left:639.5px;top:877.2px" width="17" height="14" viewBox="0 0 17 14"><g transform="translate(0.3,0)"><path d="M0.3 0.4H5.6V13.3H0.3" fill="none" stroke="#4b7fd8" stroke-width="0.9"/><path d="M0.5 4.2V12" stroke="#8cb0ee" stroke-width="0.6"/><path d="M0.3 2.4H4.1" stroke="#63c263" stroke-width="0.9"/><path d="M0.3 4.3H4.1M0.3 6.3H4.1M0.3 8.3H4.1M0.3 10.3H4.1" stroke="#8cb0ee" stroke-width="0.7"/><path d="M15.8 0.4H11.2V13.3H15.8" fill="none" stroke="#8cb0ee" stroke-width="0.9"/><path d="M11.2 0.4H15.8M11.2 13.3H15.8" stroke="#4b7fd8" stroke-width="0.9"/><path d="M12.3 2.4H15.8" stroke="#63c263" stroke-width="0.9"/><path d="M13.4 4.3V12" stroke="#8cb0ee" stroke-width="1" stroke-dasharray="1,1"/><path d="M14.9 4.3V12" stroke="#8cb0ee" stroke-width="0.6"/><path d="M6.4 9.1L11.3 4.9" stroke="#1e9a2e" stroke-width="2.9" stroke-linecap="round"/><path d="M6.4 9.1L11.3 4.9" stroke="#62c462" stroke-width="0.8" stroke-linecap="round" stroke-dasharray="0.9,0.9"/></g></svg>
<div class="t" style="left:659.4px;top:877.4px;font-size:12.35px;font-weight:700;color:#0899d6">Struktur</div>
<svg style="left:716.6px;top:876.2px" width="15" height="15" viewBox="0 0 15 15"><circle cx="5.2" cy="5.5" r="4.6" fill="#d6e4f7" stroke="#a9c3e8" stroke-width="0.8"/><circle cx="4.6" cy="4.9" r="2.4" fill="#fff" opacity="0.5"/>
<path d="M9.4 10.6L12.2 12.6" stroke="#c57f2a" stroke-width="2.2" stroke-linecap="round"/><path d="M6.9 6.4h5.4M9.6 3.7v5.4" stroke="#2f9a2f" stroke-width="2.1"/></svg>
<div class="t" style="left:735.4px;top:877.4px;font-size:12.35px;font-weight:700;color:#0899d6">Suche</div>
<svg style="left:779.6px;top:876.3px" width="16" height="17" viewBox="0 0 16 17"><rect x="0.5" y="2" width="4.8" height="13.4" fill="#d8d8d8"/>
<path d="M0.5 1.9H5.9V3.1M0.5 5.6H2.9M0.5 11.7H2.9M0.5 15.5H5.9V14.3" fill="none" stroke="#111" stroke-width="1.1"/>
<path d="M1.3 8.7L5.9 4.4V7.3H9.2V10.1H5.9V13z" fill="#6a52d6"/>
<rect x="10.6" y="6.4" width="3.6" height="4.5" fill="#ffd500" stroke="#151515" stroke-width="1"/>
<path d="M12.9 1.1L13.4 2.1 14.4 2.6 13.4 3.1 12.9 4.1 12.4 3.1 11.4 2.6 12.4 2.1z" fill="#6a52d6"/></svg>
<div class="t" style="left:798.4px;top:877.4px;font-size:12.35px;font-weight:700;color:#0899d6">Einfügen</div>
<svg style="left:857.7px;top:876.8px" width="17" height="16" viewBox="0 0 17 16"><rect x="2.5" y="0.3" width="11.5" height="5" rx="1" fill="#d9d9d9" stroke="#555" stroke-width="0.7"/>
<rect x="0.3" y="2.3" width="15.9" height="7.6" rx="0.6" fill="#6f9de3"/><rect x="2.5" y="1" width="11.5" height="3" rx="0.8" fill="#e6e6e6" stroke="#666" stroke-width="0.5"/><rect x="0.3" y="4.8" width="15.9" height="1.3" fill="#2f5fb8"/>
<path d="M2.5 10v4.8M5.3 10v4.8M8.2 10v4.8M11.1 10v4.8M13.9 10v4.8" stroke="#777" stroke-width="1.5" stroke-linecap="round"/><path d="M2.5 10v4.6M5.3 10v4.6M8.2 10v4.6M11.1 10v4.6M13.9 10v4.6" stroke="#f4f4f4" stroke-width="0.6"/></svg>
<div class="t" style="left:877.6px;top:877.4px;font-size:12.35px;font-weight:700;color:#0899d6">Leeren</div>
<svg style="left:926.8px;top:877.5px" width="15" height="15" viewBox="0 0 15 15"><defs><radialGradient id="rg" cx="0.5" cy="0.3" r="0.7"><stop offset="0" stop-color="#f98b7f"/><stop offset="1" stop-color="#d93425"/></radialGradient></defs><circle cx="7.2" cy="7.1" r="6.7" fill="url(#rg)" stroke="#c23023" stroke-width="0.6"/>
<circle cx="7.2" cy="7.1" r="5.4" fill="none" stroke="#fff" stroke-width="0.5" opacity="0.45"/><rect x="4" y="6" width="6.4" height="2.3" fill="#fff"/></svg>
<div class="t" style="left:945.6px;top:877.4px;font-size:12.35px;font-weight:700;color:#0899d6">Löschen</div>
<div class="t" style="left:1000px;width:86px;text-align:right;top:878.9px;font-size:10.7px;font-family:'Liberation Mono',monospace;color:#333">4</div>
<div class="t" style="left:1105.5px;top:876.5px;font-size:13.3px;color:#3a3a3a;-webkit-text-stroke:0.2px #3a3a3a">InnoDB</div>
<div class="t" style="left:1176.6px;top:876.5px;font-size:13.5px;color:#3a3a3a;-webkit-text-stroke:0.2px #3a3a3a">utf8mb4_unicode_520_ci</div>
<div class="a" style="left:1300px;width:93px;text-align:right;top:872.9px;font-size:10.7px;line-height:12.7px;font-weight:700;font-family:'Liberation Mono',monospace;color:#0899d6">48,0<br>KiB</div>
<div class="a" style="left:298.5px;top:869px;width:96px;height:40px;border:1px solid #0a93d1;border-left:0;border-radius:0 4px 0 0;background:linear-gradient(90deg,#e2e2e2,#fff 9px)"></div>
<div class="a" style="left:313.2px;top:874.8px;width:13.7px;height:4px;background:#aaa;border-radius:1px 1px 0 0"></div>
<div class="a" style="left:50px;top:875.8px;width:365.5px;height:30px;background:#f9f9fb;border:1px solid #d0d0d7;border-radius:0 5px 0 0"></div>
<div class="t" style="left:61px;top:880px;font-size:11.7px;color:#15141a">https://phpmyadmin.eu.ionos.host/db_export.php?db=dbs10315511</div>

</div></div>
</body></html>
